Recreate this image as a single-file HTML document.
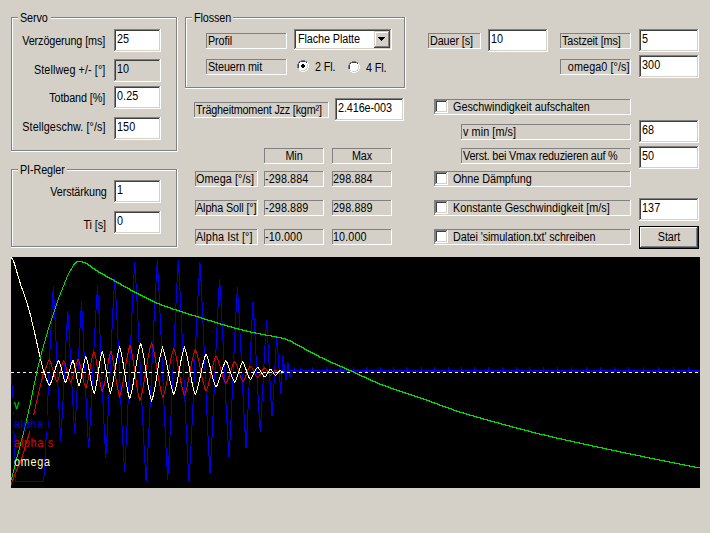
<!DOCTYPE html>
<html><head><meta charset="utf-8"><style>
html,body{margin:0;padding:0;}
body{width:710px;height:533px;background:#d4d0c8;position:relative;overflow:hidden;font-family:'Liberation Sans',sans-serif;}
</style></head><body>
<div style="position:absolute;left:11px;top:17px;width:166px;height:1px;background:#808080"></div>
<div style="position:absolute;left:11px;top:17px;width:1px;height:134px;background:#808080"></div>
<div style="position:absolute;left:11px;top:150px;width:166px;height:1px;background:#808080"></div>
<div style="position:absolute;left:176px;top:17px;width:1px;height:134px;background:#808080"></div>
<div style="position:absolute;left:12px;top:18px;width:164px;height:1px;background:#fff"></div>
<div style="position:absolute;left:12px;top:18px;width:1px;height:132px;background:#fff"></div>
<div style="position:absolute;left:11px;top:151px;width:167px;height:1px;background:#fff"></div>
<div style="position:absolute;left:177px;top:17px;width:1px;height:135px;background:#fff"></div>
<div style="position:absolute;left:18px;top:16px;width:33px;height:3px;background:#d4d0c8"></div>
<div style="position:absolute;left:20px;top:12px;font:12px/13px 'Liberation Sans',sans-serif;white-space:pre;color:#000;transform:scaleX(0.9);transform-origin:0 0;letter-spacing:-0.12px;">Servo</div>
<div style="position:absolute;left:11px;top:169px;width:166px;height:1px;background:#808080"></div>
<div style="position:absolute;left:11px;top:169px;width:1px;height:78px;background:#808080"></div>
<div style="position:absolute;left:11px;top:246px;width:166px;height:1px;background:#808080"></div>
<div style="position:absolute;left:176px;top:169px;width:1px;height:78px;background:#808080"></div>
<div style="position:absolute;left:12px;top:170px;width:164px;height:1px;background:#fff"></div>
<div style="position:absolute;left:12px;top:170px;width:1px;height:76px;background:#fff"></div>
<div style="position:absolute;left:11px;top:247px;width:167px;height:1px;background:#fff"></div>
<div style="position:absolute;left:177px;top:169px;width:1px;height:79px;background:#fff"></div>
<div style="position:absolute;left:18px;top:168px;width:49px;height:3px;background:#d4d0c8"></div>
<div style="position:absolute;left:20px;top:164px;font:12px/13px 'Liberation Sans',sans-serif;white-space:pre;color:#000;transform:scaleX(0.9);transform-origin:0 0;letter-spacing:-0.12px;">PI-Regler</div>
<div style="position:absolute;left:185px;top:17px;width:220px;height:1px;background:#808080"></div>
<div style="position:absolute;left:185px;top:17px;width:1px;height:71px;background:#808080"></div>
<div style="position:absolute;left:185px;top:87px;width:220px;height:1px;background:#808080"></div>
<div style="position:absolute;left:404px;top:17px;width:1px;height:71px;background:#808080"></div>
<div style="position:absolute;left:186px;top:18px;width:218px;height:1px;background:#fff"></div>
<div style="position:absolute;left:186px;top:18px;width:1px;height:69px;background:#fff"></div>
<div style="position:absolute;left:185px;top:88px;width:221px;height:1px;background:#fff"></div>
<div style="position:absolute;left:405px;top:17px;width:1px;height:72px;background:#fff"></div>
<div style="position:absolute;left:192px;top:16px;width:41px;height:3px;background:#d4d0c8"></div>
<div style="position:absolute;left:194px;top:12px;font:12px/13px 'Liberation Sans',sans-serif;white-space:pre;color:#000;transform:scaleX(0.9);transform-origin:0 0;letter-spacing:-0.12px;">Flossen</div>
<div style="position:absolute;right:605px;top:35px;font:12px/13px 'Liberation Sans',sans-serif;white-space:pre;color:#000;text-align:right;transform:scaleX(0.9);transform-origin:100% 0;letter-spacing:-0.12px;">Verzögerung [ms]</div>
<div style="position:absolute;right:605px;top:64px;font:12px/13px 'Liberation Sans',sans-serif;white-space:pre;color:#000;text-align:right;transform:scaleX(0.9);transform-origin:100% 0;letter-spacing:0.1px;">Stellweg +/- [°]</div>
<div style="position:absolute;right:605px;top:92px;font:12px/13px 'Liberation Sans',sans-serif;white-space:pre;color:#000;text-align:right;transform:scaleX(0.9);transform-origin:100% 0;letter-spacing:-0.12px;">Totband [%]</div>
<div style="position:absolute;right:604px;top:121px;font:12px/13px 'Liberation Sans',sans-serif;white-space:pre;color:#000;text-align:right;transform:scaleX(0.9);transform-origin:100% 0;letter-spacing:0.1px;">Stellgeschw. [°/s]</div>
<div style="position:absolute;left:114px;top:29px;width:47px;height:23px;background:#fff"></div>
<div style="position:absolute;left:114px;top:29px;width:46px;height:1px;background:#808080"></div>
<div style="position:absolute;left:114px;top:29px;width:1px;height:22px;background:#808080"></div>
<div style="position:absolute;left:114px;top:51px;width:47px;height:1px;background:#fff"></div>
<div style="position:absolute;left:160px;top:29px;width:1px;height:23px;background:#fff"></div>
<div style="position:absolute;left:115px;top:30px;width:44px;height:1px;background:#404040"></div>
<div style="position:absolute;left:115px;top:30px;width:1px;height:20px;background:#404040"></div>
<div style="position:absolute;left:115px;top:50px;width:45px;height:1px;background:#d4d0c8"></div>
<div style="position:absolute;left:159px;top:30px;width:1px;height:21px;background:#d4d0c8"></div>
<div style="position:absolute;left:117px;top:33px;font:12px/13px 'Liberation Sans',sans-serif;white-space:pre;color:#000;transform:scaleX(0.9);transform-origin:0 0;letter-spacing:0.1px;">25</div>
<div style="position:absolute;left:114px;top:59px;width:47px;height:23px;background:#d4d0c8"></div>
<div style="position:absolute;left:114px;top:59px;width:46px;height:1px;background:#808080"></div>
<div style="position:absolute;left:114px;top:59px;width:1px;height:22px;background:#808080"></div>
<div style="position:absolute;left:114px;top:81px;width:47px;height:1px;background:#fff"></div>
<div style="position:absolute;left:160px;top:59px;width:1px;height:23px;background:#fff"></div>
<div style="position:absolute;left:115px;top:60px;width:44px;height:1px;background:#404040"></div>
<div style="position:absolute;left:115px;top:60px;width:1px;height:20px;background:#404040"></div>
<div style="position:absolute;left:115px;top:80px;width:45px;height:1px;background:#d4d0c8"></div>
<div style="position:absolute;left:159px;top:60px;width:1px;height:21px;background:#d4d0c8"></div>
<div style="position:absolute;left:117px;top:63px;font:12px/13px 'Liberation Sans',sans-serif;white-space:pre;color:#000;transform:scaleX(0.9);transform-origin:0 0;letter-spacing:0.1px;">10</div>
<div style="position:absolute;left:114px;top:86px;width:47px;height:23px;background:#fff"></div>
<div style="position:absolute;left:114px;top:86px;width:46px;height:1px;background:#808080"></div>
<div style="position:absolute;left:114px;top:86px;width:1px;height:22px;background:#808080"></div>
<div style="position:absolute;left:114px;top:108px;width:47px;height:1px;background:#fff"></div>
<div style="position:absolute;left:160px;top:86px;width:1px;height:23px;background:#fff"></div>
<div style="position:absolute;left:115px;top:87px;width:44px;height:1px;background:#404040"></div>
<div style="position:absolute;left:115px;top:87px;width:1px;height:20px;background:#404040"></div>
<div style="position:absolute;left:115px;top:107px;width:45px;height:1px;background:#d4d0c8"></div>
<div style="position:absolute;left:159px;top:87px;width:1px;height:21px;background:#d4d0c8"></div>
<div style="position:absolute;left:117px;top:90px;font:12px/13px 'Liberation Sans',sans-serif;white-space:pre;color:#000;transform:scaleX(0.9);transform-origin:0 0;letter-spacing:0.1px;">0.25</div>
<div style="position:absolute;left:114px;top:117px;width:47px;height:23px;background:#fff"></div>
<div style="position:absolute;left:114px;top:117px;width:46px;height:1px;background:#808080"></div>
<div style="position:absolute;left:114px;top:117px;width:1px;height:22px;background:#808080"></div>
<div style="position:absolute;left:114px;top:139px;width:47px;height:1px;background:#fff"></div>
<div style="position:absolute;left:160px;top:117px;width:1px;height:23px;background:#fff"></div>
<div style="position:absolute;left:115px;top:118px;width:44px;height:1px;background:#404040"></div>
<div style="position:absolute;left:115px;top:118px;width:1px;height:20px;background:#404040"></div>
<div style="position:absolute;left:115px;top:138px;width:45px;height:1px;background:#d4d0c8"></div>
<div style="position:absolute;left:159px;top:118px;width:1px;height:21px;background:#d4d0c8"></div>
<div style="position:absolute;left:117px;top:121px;font:12px/13px 'Liberation Sans',sans-serif;white-space:pre;color:#000;transform:scaleX(0.9);transform-origin:0 0;letter-spacing:0.1px;">150</div>
<div style="position:absolute;right:603px;top:186px;font:12px/13px 'Liberation Sans',sans-serif;white-space:pre;color:#000;text-align:right;transform:scaleX(0.9);transform-origin:100% 0;letter-spacing:-0.12px;">Verstärkung</div>
<div style="position:absolute;right:604px;top:219px;font:12px/13px 'Liberation Sans',sans-serif;white-space:pre;color:#000;text-align:right;transform:scaleX(0.9);transform-origin:100% 0;letter-spacing:-0.12px;">Ti [s]</div>
<div style="position:absolute;left:114px;top:180px;width:47px;height:23px;background:#fff"></div>
<div style="position:absolute;left:114px;top:180px;width:46px;height:1px;background:#808080"></div>
<div style="position:absolute;left:114px;top:180px;width:1px;height:22px;background:#808080"></div>
<div style="position:absolute;left:114px;top:202px;width:47px;height:1px;background:#fff"></div>
<div style="position:absolute;left:160px;top:180px;width:1px;height:23px;background:#fff"></div>
<div style="position:absolute;left:115px;top:181px;width:44px;height:1px;background:#404040"></div>
<div style="position:absolute;left:115px;top:181px;width:1px;height:20px;background:#404040"></div>
<div style="position:absolute;left:115px;top:201px;width:45px;height:1px;background:#d4d0c8"></div>
<div style="position:absolute;left:159px;top:181px;width:1px;height:21px;background:#d4d0c8"></div>
<div style="position:absolute;left:117px;top:184px;font:12px/13px 'Liberation Sans',sans-serif;white-space:pre;color:#000;transform:scaleX(0.9);transform-origin:0 0;letter-spacing:0.1px;">1</div>
<div style="position:absolute;left:114px;top:211px;width:47px;height:23px;background:#fff"></div>
<div style="position:absolute;left:114px;top:211px;width:46px;height:1px;background:#808080"></div>
<div style="position:absolute;left:114px;top:211px;width:1px;height:22px;background:#808080"></div>
<div style="position:absolute;left:114px;top:233px;width:47px;height:1px;background:#fff"></div>
<div style="position:absolute;left:160px;top:211px;width:1px;height:23px;background:#fff"></div>
<div style="position:absolute;left:115px;top:212px;width:44px;height:1px;background:#404040"></div>
<div style="position:absolute;left:115px;top:212px;width:1px;height:20px;background:#404040"></div>
<div style="position:absolute;left:115px;top:232px;width:45px;height:1px;background:#d4d0c8"></div>
<div style="position:absolute;left:159px;top:212px;width:1px;height:21px;background:#d4d0c8"></div>
<div style="position:absolute;left:117px;top:215px;font:12px/13px 'Liberation Sans',sans-serif;white-space:pre;color:#000;transform:scaleX(0.9);transform-origin:0 0;letter-spacing:0.1px;">0</div>
<div style="position:absolute;left:206px;top:33px;width:80px;height:1px;background:#808080"></div>
<div style="position:absolute;left:206px;top:33px;width:1px;height:15px;background:#808080"></div>
<div style="position:absolute;left:206px;top:48px;width:81px;height:1px;background:#fff"></div>
<div style="position:absolute;left:286px;top:33px;width:1px;height:16px;background:#fff"></div>
<div style="position:absolute;left:208px;top:35px;font:12px/13px 'Liberation Sans',sans-serif;white-space:pre;color:#000;transform:scaleX(0.9);transform-origin:0 0;letter-spacing:-0.12px;">Profil</div>
<div style="position:absolute;left:206px;top:59px;width:80px;height:1px;background:#808080"></div>
<div style="position:absolute;left:206px;top:59px;width:1px;height:15px;background:#808080"></div>
<div style="position:absolute;left:206px;top:74px;width:81px;height:1px;background:#fff"></div>
<div style="position:absolute;left:286px;top:59px;width:1px;height:16px;background:#fff"></div>
<div style="position:absolute;left:208px;top:61px;font:12px/13px 'Liberation Sans',sans-serif;white-space:pre;color:#000;transform:scaleX(0.9);transform-origin:0 0;letter-spacing:-0.12px;">Steuern mit</div>
<div style="position:absolute;left:294px;top:29px;width:98px;height:21px;background:#fff"></div>
<div style="position:absolute;left:294px;top:29px;width:97px;height:1px;background:#808080"></div>
<div style="position:absolute;left:294px;top:29px;width:1px;height:20px;background:#808080"></div>
<div style="position:absolute;left:294px;top:49px;width:98px;height:1px;background:#fff"></div>
<div style="position:absolute;left:391px;top:29px;width:1px;height:21px;background:#fff"></div>
<div style="position:absolute;left:295px;top:30px;width:95px;height:1px;background:#404040"></div>
<div style="position:absolute;left:295px;top:30px;width:1px;height:18px;background:#404040"></div>
<div style="position:absolute;left:295px;top:48px;width:96px;height:1px;background:#d4d0c8"></div>
<div style="position:absolute;left:390px;top:30px;width:1px;height:19px;background:#d4d0c8"></div>
<div style="position:absolute;left:374px;top:31px;width:16px;height:17px;background:#d4d0c8"></div>
<div style="position:absolute;left:374px;top:31px;width:15px;height:1px;background:#d4d0c8"></div>
<div style="position:absolute;left:374px;top:31px;width:1px;height:16px;background:#d4d0c8"></div>
<div style="position:absolute;left:374px;top:47px;width:16px;height:1px;background:#404040"></div>
<div style="position:absolute;left:389px;top:31px;width:1px;height:17px;background:#404040"></div>
<div style="position:absolute;left:375px;top:32px;width:13px;height:1px;background:#fff"></div>
<div style="position:absolute;left:375px;top:32px;width:1px;height:14px;background:#fff"></div>
<div style="position:absolute;left:375px;top:46px;width:14px;height:1px;background:#808080"></div>
<div style="position:absolute;left:388px;top:32px;width:1px;height:15px;background:#808080"></div>
<svg style="position:absolute;left:378px;top:37px" width="7" height="4" shape-rendering="crispEdges"><path d="M0 0h7v1H0zM1 1h5v1H1zM2 2h3v1H2zM3 3h1v1H3z" fill="#000"/></svg>
<div style="position:absolute;left:298px;top:33px;font:12px/13px 'Liberation Sans',sans-serif;white-space:pre;color:#000;transform:scaleX(0.9);transform-origin:0 0;letter-spacing:-0.1px;">Flache Platte</div>
<svg style="position:absolute;left:297px;top:60px" width="12" height="12" viewBox="0 0 12 12" shape-rendering="crispEdges">
<path d="M4 0h4v1H4zM2 1h2v1H2zM8 1h2v1H8zM1 2h1v2H1zM0 4h1v4H0zM1 8h1v0H1z" fill="#808080"/>
<path d="M4 1h4v1H4zM2 2h2v1H2zM8 2h2v1H8zM2 3h1v1H2zM1 4h1v4H1zM2 8h0v0z" fill="#404040"/>
<path d="M2 3h8v6H2zM3 2h6v8H3zM4 9h4v1H4z" fill="#fff"/>
<path d="M10 2h1v2h-1zM10 8h1v2h-1zM11 4h1v4h-1zM8 10h2v1H8zM2 10h2v1H2zM4 11h4v1H4z" fill="#fff"/>
<path d="M10 4h1v4h-1zM8 9h2v1H8zM4 10h4v1H4zM9 8h1v1H9z" fill="#d4d0c8"/>
<path d="M5 4h2v1H5zM4 5h4v2H4zM5 7h2v1H5z" fill="#000"/>
</svg>
<div style="position:absolute;left:315px;top:61px;font:12px/13px 'Liberation Sans',sans-serif;white-space:pre;color:#000;transform:scaleX(0.9);transform-origin:0 0;letter-spacing:-0.12px;">2 Fl.</div>
<svg style="position:absolute;left:348px;top:61px" width="12" height="12" viewBox="0 0 12 12" shape-rendering="crispEdges">
<path d="M4 0h4v1H4zM2 1h2v1H2zM8 1h2v1H8zM1 2h1v2H1zM0 4h1v4H0zM1 8h1v0H1z" fill="#808080"/>
<path d="M4 1h4v1H4zM2 2h2v1H2zM8 2h2v1H8zM2 3h1v1H2zM1 4h1v4H1zM2 8h0v0z" fill="#404040"/>
<path d="M2 3h8v6H2zM3 2h6v8H3zM4 9h4v1H4z" fill="#fff"/>
<path d="M10 2h1v2h-1zM10 8h1v2h-1zM11 4h1v4h-1zM8 10h2v1H8zM2 10h2v1H2zM4 11h4v1H4z" fill="#fff"/>
<path d="M10 4h1v4h-1zM8 9h2v1H8zM4 10h4v1H4zM9 8h1v1H9z" fill="#d4d0c8"/>

</svg>
<div style="position:absolute;left:366px;top:62px;font:12px/13px 'Liberation Sans',sans-serif;white-space:pre;color:#000;transform:scaleX(0.9);transform-origin:0 0;letter-spacing:-0.12px;">4 Fl.</div>
<div style="position:absolute;left:194px;top:102px;width:134px;height:1px;background:#808080"></div>
<div style="position:absolute;left:194px;top:102px;width:1px;height:15px;background:#808080"></div>
<div style="position:absolute;left:194px;top:117px;width:135px;height:1px;background:#fff"></div>
<div style="position:absolute;left:328px;top:102px;width:1px;height:16px;background:#fff"></div>
<div style="position:absolute;left:196px;top:104px;font:12px/13px 'Liberation Sans',sans-serif;white-space:pre;color:#000;transform:scaleX(0.9);transform-origin:0 0;letter-spacing:-0.21px;">Trägheitmoment Jzz [kgm²]</div>
<div style="position:absolute;left:335px;top:98px;width:69px;height:23px;background:#fff"></div>
<div style="position:absolute;left:335px;top:98px;width:68px;height:1px;background:#808080"></div>
<div style="position:absolute;left:335px;top:98px;width:1px;height:22px;background:#808080"></div>
<div style="position:absolute;left:335px;top:120px;width:69px;height:1px;background:#fff"></div>
<div style="position:absolute;left:403px;top:98px;width:1px;height:23px;background:#fff"></div>
<div style="position:absolute;left:336px;top:99px;width:66px;height:1px;background:#404040"></div>
<div style="position:absolute;left:336px;top:99px;width:1px;height:20px;background:#404040"></div>
<div style="position:absolute;left:336px;top:119px;width:67px;height:1px;background:#d4d0c8"></div>
<div style="position:absolute;left:402px;top:99px;width:1px;height:21px;background:#d4d0c8"></div>
<div style="position:absolute;left:338px;top:102px;font:12px/13px 'Liberation Sans',sans-serif;white-space:pre;color:#000;transform:scaleX(0.9);transform-origin:0 0;letter-spacing:-0.09px;">2.416e-003</div>
<div style="position:absolute;left:428px;top:33px;width:52px;height:1px;background:#808080"></div>
<div style="position:absolute;left:428px;top:33px;width:1px;height:15px;background:#808080"></div>
<div style="position:absolute;left:428px;top:48px;width:53px;height:1px;background:#fff"></div>
<div style="position:absolute;left:480px;top:33px;width:1px;height:16px;background:#fff"></div>
<div style="position:absolute;left:430px;top:35px;font:12px/13px 'Liberation Sans',sans-serif;white-space:pre;color:#000;transform:scaleX(0.9);transform-origin:0 0;letter-spacing:-0.12px;">Dauer [s]</div>
<div style="position:absolute;left:488px;top:29px;width:60px;height:23px;background:#fff"></div>
<div style="position:absolute;left:488px;top:29px;width:59px;height:1px;background:#808080"></div>
<div style="position:absolute;left:488px;top:29px;width:1px;height:22px;background:#808080"></div>
<div style="position:absolute;left:488px;top:51px;width:60px;height:1px;background:#fff"></div>
<div style="position:absolute;left:547px;top:29px;width:1px;height:23px;background:#fff"></div>
<div style="position:absolute;left:489px;top:30px;width:57px;height:1px;background:#404040"></div>
<div style="position:absolute;left:489px;top:30px;width:1px;height:20px;background:#404040"></div>
<div style="position:absolute;left:489px;top:50px;width:58px;height:1px;background:#d4d0c8"></div>
<div style="position:absolute;left:546px;top:30px;width:1px;height:21px;background:#d4d0c8"></div>
<div style="position:absolute;left:491px;top:33px;font:12px/13px 'Liberation Sans',sans-serif;white-space:pre;color:#000;transform:scaleX(0.9);transform-origin:0 0;letter-spacing:0.1px;">10</div>
<div style="position:absolute;left:560px;top:33px;width:70px;height:1px;background:#808080"></div>
<div style="position:absolute;left:560px;top:33px;width:1px;height:15px;background:#808080"></div>
<div style="position:absolute;left:560px;top:48px;width:71px;height:1px;background:#fff"></div>
<div style="position:absolute;left:630px;top:33px;width:1px;height:16px;background:#fff"></div>
<div style="position:absolute;left:562px;top:35px;font:12px/13px 'Liberation Sans',sans-serif;white-space:pre;color:#000;transform:scaleX(0.9);transform-origin:0 0;letter-spacing:-0.12px;">Tastzeit [ms]</div>
<div style="position:absolute;left:639px;top:29px;width:60px;height:23px;background:#fff"></div>
<div style="position:absolute;left:639px;top:29px;width:59px;height:1px;background:#808080"></div>
<div style="position:absolute;left:639px;top:29px;width:1px;height:22px;background:#808080"></div>
<div style="position:absolute;left:639px;top:51px;width:60px;height:1px;background:#fff"></div>
<div style="position:absolute;left:698px;top:29px;width:1px;height:23px;background:#fff"></div>
<div style="position:absolute;left:640px;top:30px;width:57px;height:1px;background:#404040"></div>
<div style="position:absolute;left:640px;top:30px;width:1px;height:20px;background:#404040"></div>
<div style="position:absolute;left:640px;top:50px;width:58px;height:1px;background:#d4d0c8"></div>
<div style="position:absolute;left:697px;top:30px;width:1px;height:21px;background:#d4d0c8"></div>
<div style="position:absolute;left:642px;top:33px;font:12px/13px 'Liberation Sans',sans-serif;white-space:pre;color:#000;transform:scaleX(0.9);transform-origin:0 0;letter-spacing:0.1px;">5</div>
<div style="position:absolute;left:560px;top:59px;width:70px;height:1px;background:#808080"></div>
<div style="position:absolute;left:560px;top:59px;width:1px;height:15px;background:#808080"></div>
<div style="position:absolute;left:560px;top:74px;width:71px;height:1px;background:#fff"></div>
<div style="position:absolute;left:630px;top:59px;width:1px;height:16px;background:#fff"></div>
<div style="position:absolute;right:80px;top:61px;font:12px/13px 'Liberation Sans',sans-serif;white-space:pre;color:#000;text-align:right;transform:scaleX(0.9);transform-origin:100% 0;letter-spacing:0.1px;">omega0 [°/s]</div>
<div style="position:absolute;left:639px;top:55px;width:60px;height:23px;background:#fff"></div>
<div style="position:absolute;left:639px;top:55px;width:59px;height:1px;background:#808080"></div>
<div style="position:absolute;left:639px;top:55px;width:1px;height:22px;background:#808080"></div>
<div style="position:absolute;left:639px;top:77px;width:60px;height:1px;background:#fff"></div>
<div style="position:absolute;left:698px;top:55px;width:1px;height:23px;background:#fff"></div>
<div style="position:absolute;left:640px;top:56px;width:57px;height:1px;background:#404040"></div>
<div style="position:absolute;left:640px;top:56px;width:1px;height:20px;background:#404040"></div>
<div style="position:absolute;left:640px;top:76px;width:58px;height:1px;background:#d4d0c8"></div>
<div style="position:absolute;left:697px;top:56px;width:1px;height:21px;background:#d4d0c8"></div>
<div style="position:absolute;left:642px;top:59px;font:12px/13px 'Liberation Sans',sans-serif;white-space:pre;color:#000;transform:scaleX(0.9);transform-origin:0 0;letter-spacing:0.1px;">300</div>
<div style="position:absolute;left:434px;top:99px;width:196px;height:1px;background:#808080"></div>
<div style="position:absolute;left:434px;top:99px;width:1px;height:15px;background:#808080"></div>
<div style="position:absolute;left:434px;top:114px;width:197px;height:1px;background:#fff"></div>
<div style="position:absolute;left:630px;top:99px;width:1px;height:16px;background:#fff"></div>
<div style="position:absolute;left:435px;top:100px;width:13px;height:13px;background:#fff"></div>
<div style="position:absolute;left:435px;top:100px;width:12px;height:1px;background:#808080"></div>
<div style="position:absolute;left:435px;top:100px;width:1px;height:12px;background:#808080"></div>
<div style="position:absolute;left:435px;top:112px;width:13px;height:1px;background:#fff"></div>
<div style="position:absolute;left:447px;top:100px;width:1px;height:13px;background:#fff"></div>
<div style="position:absolute;left:436px;top:101px;width:10px;height:1px;background:#404040"></div>
<div style="position:absolute;left:436px;top:101px;width:1px;height:10px;background:#404040"></div>
<div style="position:absolute;left:436px;top:111px;width:11px;height:1px;background:#d4d0c8"></div>
<div style="position:absolute;left:446px;top:101px;width:1px;height:11px;background:#d4d0c8"></div>
<div style="position:absolute;left:438px;top:104px;font:12px/13px 'Liberation Sans',sans-serif;white-space:pre;color:#000;transform:scaleX(0.9);transform-origin:0 0;letter-spacing:0.1px;"></div>
<div style="position:absolute;left:453px;top:101px;font:12px/13px 'Liberation Sans',sans-serif;white-space:pre;color:#000;transform:scaleX(0.9);transform-origin:0 0;letter-spacing:0px;">Geschwindigkeit aufschalten</div>
<div style="position:absolute;left:461px;top:124px;width:169px;height:1px;background:#808080"></div>
<div style="position:absolute;left:461px;top:124px;width:1px;height:15px;background:#808080"></div>
<div style="position:absolute;left:461px;top:139px;width:170px;height:1px;background:#fff"></div>
<div style="position:absolute;left:630px;top:124px;width:1px;height:16px;background:#fff"></div>
<div style="position:absolute;left:463px;top:126px;font:12px/13px 'Liberation Sans',sans-serif;white-space:pre;color:#000;transform:scaleX(0.9);transform-origin:0 0;letter-spacing:0.1px;">v min [m/s]</div>
<div style="position:absolute;left:639px;top:120px;width:60px;height:23px;background:#fff"></div>
<div style="position:absolute;left:639px;top:120px;width:59px;height:1px;background:#808080"></div>
<div style="position:absolute;left:639px;top:120px;width:1px;height:22px;background:#808080"></div>
<div style="position:absolute;left:639px;top:142px;width:60px;height:1px;background:#fff"></div>
<div style="position:absolute;left:698px;top:120px;width:1px;height:23px;background:#fff"></div>
<div style="position:absolute;left:640px;top:121px;width:57px;height:1px;background:#404040"></div>
<div style="position:absolute;left:640px;top:121px;width:1px;height:20px;background:#404040"></div>
<div style="position:absolute;left:640px;top:141px;width:58px;height:1px;background:#d4d0c8"></div>
<div style="position:absolute;left:697px;top:121px;width:1px;height:21px;background:#d4d0c8"></div>
<div style="position:absolute;left:642px;top:124px;font:12px/13px 'Liberation Sans',sans-serif;white-space:pre;color:#000;transform:scaleX(0.9);transform-origin:0 0;letter-spacing:0.1px;">68</div>
<div style="position:absolute;left:461px;top:148px;width:169px;height:1px;background:#808080"></div>
<div style="position:absolute;left:461px;top:148px;width:1px;height:15px;background:#808080"></div>
<div style="position:absolute;left:461px;top:163px;width:170px;height:1px;background:#fff"></div>
<div style="position:absolute;left:630px;top:148px;width:1px;height:16px;background:#fff"></div>
<div style="position:absolute;left:463px;top:150px;font:12px/13px 'Liberation Sans',sans-serif;white-space:pre;color:#000;transform:scaleX(0.9);transform-origin:0 0;letter-spacing:-0.2px;">Verst. bei Vmax reduzieren auf %</div>
<div style="position:absolute;left:639px;top:146px;width:60px;height:23px;background:#fff"></div>
<div style="position:absolute;left:639px;top:146px;width:59px;height:1px;background:#808080"></div>
<div style="position:absolute;left:639px;top:146px;width:1px;height:22px;background:#808080"></div>
<div style="position:absolute;left:639px;top:168px;width:60px;height:1px;background:#fff"></div>
<div style="position:absolute;left:698px;top:146px;width:1px;height:23px;background:#fff"></div>
<div style="position:absolute;left:640px;top:147px;width:57px;height:1px;background:#404040"></div>
<div style="position:absolute;left:640px;top:147px;width:1px;height:20px;background:#404040"></div>
<div style="position:absolute;left:640px;top:167px;width:58px;height:1px;background:#d4d0c8"></div>
<div style="position:absolute;left:697px;top:147px;width:1px;height:21px;background:#d4d0c8"></div>
<div style="position:absolute;left:642px;top:150px;font:12px/13px 'Liberation Sans',sans-serif;white-space:pre;color:#000;transform:scaleX(0.9);transform-origin:0 0;letter-spacing:0.1px;">50</div>
<div style="position:absolute;left:434px;top:171px;width:196px;height:1px;background:#808080"></div>
<div style="position:absolute;left:434px;top:171px;width:1px;height:15px;background:#808080"></div>
<div style="position:absolute;left:434px;top:186px;width:197px;height:1px;background:#fff"></div>
<div style="position:absolute;left:630px;top:171px;width:1px;height:16px;background:#fff"></div>
<div style="position:absolute;left:435px;top:172px;width:13px;height:13px;background:#fff"></div>
<div style="position:absolute;left:435px;top:172px;width:12px;height:1px;background:#808080"></div>
<div style="position:absolute;left:435px;top:172px;width:1px;height:12px;background:#808080"></div>
<div style="position:absolute;left:435px;top:184px;width:13px;height:1px;background:#fff"></div>
<div style="position:absolute;left:447px;top:172px;width:1px;height:13px;background:#fff"></div>
<div style="position:absolute;left:436px;top:173px;width:10px;height:1px;background:#404040"></div>
<div style="position:absolute;left:436px;top:173px;width:1px;height:10px;background:#404040"></div>
<div style="position:absolute;left:436px;top:183px;width:11px;height:1px;background:#d4d0c8"></div>
<div style="position:absolute;left:446px;top:173px;width:1px;height:11px;background:#d4d0c8"></div>
<div style="position:absolute;left:438px;top:176px;font:12px/13px 'Liberation Sans',sans-serif;white-space:pre;color:#000;transform:scaleX(0.9);transform-origin:0 0;letter-spacing:0.1px;"></div>
<div style="position:absolute;left:453px;top:173px;font:12px/13px 'Liberation Sans',sans-serif;white-space:pre;color:#000;transform:scaleX(0.9);transform-origin:0 0;letter-spacing:-0.05px;">Ohne Dämpfung</div>
<div style="position:absolute;left:434px;top:200px;width:196px;height:1px;background:#808080"></div>
<div style="position:absolute;left:434px;top:200px;width:1px;height:15px;background:#808080"></div>
<div style="position:absolute;left:434px;top:215px;width:197px;height:1px;background:#fff"></div>
<div style="position:absolute;left:630px;top:200px;width:1px;height:16px;background:#fff"></div>
<div style="position:absolute;left:435px;top:201px;width:13px;height:13px;background:#fff"></div>
<div style="position:absolute;left:435px;top:201px;width:12px;height:1px;background:#808080"></div>
<div style="position:absolute;left:435px;top:201px;width:1px;height:12px;background:#808080"></div>
<div style="position:absolute;left:435px;top:213px;width:13px;height:1px;background:#fff"></div>
<div style="position:absolute;left:447px;top:201px;width:1px;height:13px;background:#fff"></div>
<div style="position:absolute;left:436px;top:202px;width:10px;height:1px;background:#404040"></div>
<div style="position:absolute;left:436px;top:202px;width:1px;height:10px;background:#404040"></div>
<div style="position:absolute;left:436px;top:212px;width:11px;height:1px;background:#d4d0c8"></div>
<div style="position:absolute;left:446px;top:202px;width:1px;height:11px;background:#d4d0c8"></div>
<div style="position:absolute;left:438px;top:205px;font:12px/13px 'Liberation Sans',sans-serif;white-space:pre;color:#000;transform:scaleX(0.9);transform-origin:0 0;letter-spacing:0.1px;"></div>
<div style="position:absolute;left:453px;top:202px;font:12px/13px 'Liberation Sans',sans-serif;white-space:pre;color:#000;transform:scaleX(0.9);transform-origin:0 0;letter-spacing:0px;">Konstante Geschwindigkeit [m/s]</div>
<div style="position:absolute;left:639px;top:198px;width:60px;height:23px;background:#fff"></div>
<div style="position:absolute;left:639px;top:198px;width:59px;height:1px;background:#808080"></div>
<div style="position:absolute;left:639px;top:198px;width:1px;height:22px;background:#808080"></div>
<div style="position:absolute;left:639px;top:220px;width:60px;height:1px;background:#fff"></div>
<div style="position:absolute;left:698px;top:198px;width:1px;height:23px;background:#fff"></div>
<div style="position:absolute;left:640px;top:199px;width:57px;height:1px;background:#404040"></div>
<div style="position:absolute;left:640px;top:199px;width:1px;height:20px;background:#404040"></div>
<div style="position:absolute;left:640px;top:219px;width:58px;height:1px;background:#d4d0c8"></div>
<div style="position:absolute;left:697px;top:199px;width:1px;height:21px;background:#d4d0c8"></div>
<div style="position:absolute;left:642px;top:202px;font:12px/13px 'Liberation Sans',sans-serif;white-space:pre;color:#000;transform:scaleX(0.9);transform-origin:0 0;letter-spacing:0.1px;">137</div>
<div style="position:absolute;left:434px;top:229px;width:196px;height:1px;background:#808080"></div>
<div style="position:absolute;left:434px;top:229px;width:1px;height:15px;background:#808080"></div>
<div style="position:absolute;left:434px;top:244px;width:197px;height:1px;background:#fff"></div>
<div style="position:absolute;left:630px;top:229px;width:1px;height:16px;background:#fff"></div>
<div style="position:absolute;left:435px;top:230px;width:13px;height:13px;background:#fff"></div>
<div style="position:absolute;left:435px;top:230px;width:12px;height:1px;background:#808080"></div>
<div style="position:absolute;left:435px;top:230px;width:1px;height:12px;background:#808080"></div>
<div style="position:absolute;left:435px;top:242px;width:13px;height:1px;background:#fff"></div>
<div style="position:absolute;left:447px;top:230px;width:1px;height:13px;background:#fff"></div>
<div style="position:absolute;left:436px;top:231px;width:10px;height:1px;background:#404040"></div>
<div style="position:absolute;left:436px;top:231px;width:1px;height:10px;background:#404040"></div>
<div style="position:absolute;left:436px;top:241px;width:11px;height:1px;background:#d4d0c8"></div>
<div style="position:absolute;left:446px;top:231px;width:1px;height:11px;background:#d4d0c8"></div>
<div style="position:absolute;left:438px;top:234px;font:12px/13px 'Liberation Sans',sans-serif;white-space:pre;color:#000;transform:scaleX(0.9);transform-origin:0 0;letter-spacing:0.1px;"></div>
<div style="position:absolute;left:453px;top:231px;font:12px/13px 'Liberation Sans',sans-serif;white-space:pre;color:#000;transform:scaleX(0.9);transform-origin:0 0;letter-spacing:-0.1px;">Datei 'simulation.txt' schreiben</div>
<div style="position:absolute;left:639px;top:226px;width:60px;height:23px;background:#000"></div>
<div style="position:absolute;left:640px;top:227px;width:58px;height:21px;background:#d4d0c8"></div>
<div style="position:absolute;left:640px;top:227px;width:57px;height:1px;background:#fff"></div>
<div style="position:absolute;left:640px;top:227px;width:1px;height:20px;background:#fff"></div>
<div style="position:absolute;left:640px;top:247px;width:58px;height:1px;background:#404040"></div>
<div style="position:absolute;left:697px;top:227px;width:1px;height:21px;background:#404040"></div>
<div style="position:absolute;left:641px;top:246px;width:56px;height:1px;background:#808080"></div>
<div style="position:absolute;left:696px;top:228px;width:1px;height:19px;background:#808080"></div>
<div style="position:absolute;left:640px;width:58px;top:231px;font:12px/13px 'Liberation Sans',sans-serif;white-space:pre;color:#000;text-align:center;transform:scaleX(0.9);transform-origin:50% 0;letter-spacing:-0.12px;">Start</div>
<div style="position:absolute;left:264px;top:148px;width:59px;height:1px;background:#808080"></div>
<div style="position:absolute;left:264px;top:148px;width:1px;height:15px;background:#808080"></div>
<div style="position:absolute;left:264px;top:163px;width:60px;height:1px;background:#fff"></div>
<div style="position:absolute;left:323px;top:148px;width:1px;height:16px;background:#fff"></div>
<div style="position:absolute;left:265px;width:58px;top:150px;font:12px/13px 'Liberation Sans',sans-serif;white-space:pre;color:#000;text-align:center;transform:scaleX(0.9);transform-origin:50% 0;letter-spacing:-0.12px;">Min</div>
<div style="position:absolute;left:332px;top:148px;width:59px;height:1px;background:#808080"></div>
<div style="position:absolute;left:332px;top:148px;width:1px;height:15px;background:#808080"></div>
<div style="position:absolute;left:332px;top:163px;width:60px;height:1px;background:#fff"></div>
<div style="position:absolute;left:391px;top:148px;width:1px;height:16px;background:#fff"></div>
<div style="position:absolute;left:333px;width:58px;top:150px;font:12px/13px 'Liberation Sans',sans-serif;white-space:pre;color:#000;text-align:center;transform:scaleX(0.9);transform-origin:50% 0;letter-spacing:-0.12px;">Max</div>
<div style="position:absolute;left:195px;top:171px;width:62px;height:1px;background:#808080"></div>
<div style="position:absolute;left:195px;top:171px;width:1px;height:15px;background:#808080"></div>
<div style="position:absolute;left:195px;top:186px;width:63px;height:1px;background:#fff"></div>
<div style="position:absolute;left:257px;top:171px;width:1px;height:16px;background:#fff"></div>
<div style="position:absolute;left:196px;top:173px;font:12px/13px 'Liberation Sans',sans-serif;white-space:pre;color:#000;transform:scaleX(0.9);transform-origin:0 0;letter-spacing:0.1px;">Omega [°/s]</div>
<div style="position:absolute;left:264px;top:171px;width:59px;height:1px;background:#808080"></div>
<div style="position:absolute;left:264px;top:171px;width:1px;height:15px;background:#808080"></div>
<div style="position:absolute;left:264px;top:186px;width:60px;height:1px;background:#fff"></div>
<div style="position:absolute;left:323px;top:171px;width:1px;height:16px;background:#fff"></div>
<div style="position:absolute;left:265px;top:173px;font:12px/13px 'Liberation Sans',sans-serif;white-space:pre;color:#000;transform:scaleX(0.9);transform-origin:0 0;letter-spacing:0.1px;">-298.884</div>
<div style="position:absolute;left:332px;top:171px;width:59px;height:1px;background:#808080"></div>
<div style="position:absolute;left:332px;top:171px;width:1px;height:15px;background:#808080"></div>
<div style="position:absolute;left:332px;top:186px;width:60px;height:1px;background:#fff"></div>
<div style="position:absolute;left:391px;top:171px;width:1px;height:16px;background:#fff"></div>
<div style="position:absolute;left:333px;top:173px;font:12px/13px 'Liberation Sans',sans-serif;white-space:pre;color:#000;transform:scaleX(0.9);transform-origin:0 0;letter-spacing:0.1px;">298.884</div>
<div style="position:absolute;left:195px;top:200px;width:62px;height:1px;background:#808080"></div>
<div style="position:absolute;left:195px;top:200px;width:1px;height:15px;background:#808080"></div>
<div style="position:absolute;left:195px;top:215px;width:63px;height:1px;background:#fff"></div>
<div style="position:absolute;left:257px;top:200px;width:1px;height:16px;background:#fff"></div>
<div style="position:absolute;left:196px;top:202px;font:12px/13px 'Liberation Sans',sans-serif;white-space:pre;color:#000;transform:scaleX(0.9);transform-origin:0 0;letter-spacing:-0.12px;">Alpha Soll [°]</div>
<div style="position:absolute;left:264px;top:200px;width:59px;height:1px;background:#808080"></div>
<div style="position:absolute;left:264px;top:200px;width:1px;height:15px;background:#808080"></div>
<div style="position:absolute;left:264px;top:215px;width:60px;height:1px;background:#fff"></div>
<div style="position:absolute;left:323px;top:200px;width:1px;height:16px;background:#fff"></div>
<div style="position:absolute;left:265px;top:202px;font:12px/13px 'Liberation Sans',sans-serif;white-space:pre;color:#000;transform:scaleX(0.9);transform-origin:0 0;letter-spacing:0.1px;">-298.889</div>
<div style="position:absolute;left:332px;top:200px;width:59px;height:1px;background:#808080"></div>
<div style="position:absolute;left:332px;top:200px;width:1px;height:15px;background:#808080"></div>
<div style="position:absolute;left:332px;top:215px;width:60px;height:1px;background:#fff"></div>
<div style="position:absolute;left:391px;top:200px;width:1px;height:16px;background:#fff"></div>
<div style="position:absolute;left:333px;top:202px;font:12px/13px 'Liberation Sans',sans-serif;white-space:pre;color:#000;transform:scaleX(0.9);transform-origin:0 0;letter-spacing:0.1px;">298.889</div>
<div style="position:absolute;left:195px;top:229px;width:62px;height:1px;background:#808080"></div>
<div style="position:absolute;left:195px;top:229px;width:1px;height:15px;background:#808080"></div>
<div style="position:absolute;left:195px;top:244px;width:63px;height:1px;background:#fff"></div>
<div style="position:absolute;left:257px;top:229px;width:1px;height:16px;background:#fff"></div>
<div style="position:absolute;left:196px;top:231px;font:12px/13px 'Liberation Sans',sans-serif;white-space:pre;color:#000;transform:scaleX(0.9);transform-origin:0 0;letter-spacing:0.1px;">Alpha Ist [°]</div>
<div style="position:absolute;left:264px;top:229px;width:59px;height:1px;background:#808080"></div>
<div style="position:absolute;left:264px;top:229px;width:1px;height:15px;background:#808080"></div>
<div style="position:absolute;left:264px;top:244px;width:60px;height:1px;background:#fff"></div>
<div style="position:absolute;left:323px;top:229px;width:1px;height:16px;background:#fff"></div>
<div style="position:absolute;left:265px;top:231px;font:12px/13px 'Liberation Sans',sans-serif;white-space:pre;color:#000;transform:scaleX(0.9);transform-origin:0 0;letter-spacing:0.1px;">-10.000</div>
<div style="position:absolute;left:332px;top:229px;width:59px;height:1px;background:#808080"></div>
<div style="position:absolute;left:332px;top:229px;width:1px;height:15px;background:#808080"></div>
<div style="position:absolute;left:332px;top:244px;width:60px;height:1px;background:#fff"></div>
<div style="position:absolute;left:391px;top:229px;width:1px;height:16px;background:#fff"></div>
<div style="position:absolute;left:333px;top:231px;font:12px/13px 'Liberation Sans',sans-serif;white-space:pre;color:#000;transform:scaleX(0.9);transform-origin:0 0;letter-spacing:0.1px;">10.000</div>
<svg style="position:absolute;left:11px;top:257px" width="689" height="231" viewBox="11 257 689 231" shape-rendering="crispEdges">
<rect x="11" y="257" width="689" height="231" fill="#000"/>
<polyline points="11.50,372.50 12.50,397.50 16.00,481.50 43.70,481.50 43.70,481.50 43.95,477.33 44.21,473.02 44.46,468.59 44.71,464.02 44.96,459.33 45.22,454.52 45.47,449.59 45.72,444.55 45.97,439.40 46.23,434.15 46.48,428.82 46.73,423.40 46.98,417.91 47.24,412.36 47.49,406.75 47.74,401.10 47.99,395.42 48.25,389.72 48.50,384.00 48.75,378.28 49.01,372.58 49.26,366.90 49.51,361.25 49.76,355.64 50.02,350.09 50.27,344.60 50.52,339.18 50.77,333.85 51.03,328.60 51.28,323.45 51.53,318.41 51.78,313.48 52.04,308.67 52.29,303.98 52.54,299.41 52.79,294.98 53.05,290.67 53.30,286.50 53.56,290.84 53.81,295.36 54.07,300.05 54.32,304.92 54.58,309.95 54.83,315.13 55.09,320.46 55.34,325.92 55.60,331.49 55.85,337.17 56.11,342.93 56.36,348.76 56.62,354.64 56.87,360.54 57.13,366.46 57.38,372.36 57.64,378.24 57.89,384.07 58.15,389.83 58.40,395.51 58.66,401.08 58.91,406.54 59.17,411.87 59.42,417.05 59.68,422.08 59.93,426.95 60.19,431.64 60.44,436.16 60.70,440.50 60.95,436.73 61.21,432.81 61.46,428.72 61.71,424.48 61.97,420.09 62.22,415.57 62.48,410.92 62.73,406.16 62.98,401.29 63.24,396.34 63.49,391.32 63.74,386.24 64.00,381.13 64.25,376.00 64.50,370.87 64.76,365.76 65.01,360.68 65.26,355.66 65.52,350.71 65.77,345.84 66.03,341.08 66.28,336.43 66.53,331.91 66.79,327.52 67.04,323.28 67.29,319.19 67.55,315.27 67.80,311.50 68.06,315.18 68.31,319.03 68.57,323.03 68.82,327.19 69.08,331.50 69.33,335.94 69.59,340.51 69.84,345.19 70.10,349.98 70.36,354.84 70.61,359.77 70.87,364.74 71.12,369.74 71.38,374.76 71.63,379.76 71.89,384.73 72.14,389.66 72.40,394.52 72.66,399.31 72.91,403.99 73.17,408.56 73.42,413.00 73.68,417.31 73.93,421.47 74.19,425.47 74.44,429.32 74.70,433.00 74.95,429.05 75.20,424.91 75.46,420.61 75.71,416.15 75.96,411.52 76.21,406.75 76.46,401.84 76.71,396.81 76.97,391.68 77.22,386.45 77.47,381.16 77.72,375.82 77.97,370.44 78.23,365.06 78.48,359.68 78.73,354.34 78.98,349.05 79.23,343.83 79.49,338.69 79.74,333.66 79.99,328.75 80.24,323.98 80.49,319.35 80.74,314.89 81.00,310.59 81.25,306.45 81.50,302.50 81.75,306.76 82.01,311.20 82.26,315.82 82.51,320.61 82.77,325.56 83.02,330.68 83.28,335.93 83.53,341.32 83.78,346.81 84.04,352.41 84.29,358.09 84.54,363.82 84.80,369.60 85.05,375.40 85.30,381.20 85.56,386.98 85.81,392.71 86.06,398.39 86.32,403.99 86.57,409.48 86.82,414.87 87.08,420.12 87.33,425.24 87.59,430.19 87.84,434.98 88.09,439.60 88.35,444.04 88.60,448.30 88.85,444.54 89.11,440.64 89.36,436.62 89.62,432.48 89.87,428.21 90.13,423.82 90.38,419.32 90.63,414.72 90.89,410.02 91.14,405.23 91.40,400.35 91.65,395.41 91.91,390.40 92.16,385.34 92.41,380.25 92.67,375.12 92.92,369.98 93.18,364.82 93.43,359.68 93.69,354.55 93.94,349.46 94.19,344.40 94.45,339.39 94.70,334.45 94.96,329.57 95.21,324.78 95.47,320.08 95.72,315.48 95.97,310.98 96.23,306.59 96.48,302.32 96.74,298.18 96.99,294.16 97.25,290.26 97.50,286.50 97.75,290.72 98.00,295.10 98.25,299.63 98.51,304.31 98.76,309.13 99.01,314.09 99.26,319.18 99.51,324.39 99.76,329.71 100.02,335.14 100.27,340.65 100.52,346.24 100.77,351.90 101.02,357.60 101.27,363.35 101.52,369.11 101.78,374.89 102.03,380.65 102.28,386.40 102.53,392.10 102.78,397.76 103.03,403.35 103.28,408.86 103.54,414.29 103.79,419.61 104.04,424.82 104.29,429.91 104.54,434.87 104.79,439.69 105.05,444.37 105.30,448.90 105.55,453.28 105.80,457.50 106.05,453.34 106.31,449.03 106.56,444.58 106.82,439.99 107.07,435.27 107.33,430.42 107.58,425.44 107.83,420.35 108.09,415.15 108.34,409.85 108.60,404.46 108.85,398.99 109.11,393.45 109.36,387.85 109.61,382.21 109.87,376.54 110.12,370.85 110.38,365.15 110.63,359.46 110.89,353.79 111.14,348.15 111.39,342.55 111.65,337.01 111.90,331.54 112.16,326.15 112.41,320.85 112.67,315.65 112.92,310.56 113.17,305.58 113.43,300.73 113.68,296.01 113.94,291.42 114.19,286.97 114.45,282.66 114.70,278.50 114.95,282.53 115.21,286.69 115.46,290.98 115.72,295.38 115.97,299.91 116.22,304.55 116.48,309.30 116.73,314.15 116.98,319.11 117.24,324.16 117.49,329.30 117.75,334.52 118.00,339.81 118.25,345.16 118.51,350.56 118.76,356.01 119.02,361.50 119.27,367.01 119.52,372.53 119.78,378.07 120.03,383.59 120.28,389.10 120.54,394.59 120.79,400.04 121.05,405.44 121.30,410.79 121.55,416.08 121.81,421.30 122.06,426.44 122.32,431.49 122.57,436.45 122.82,441.30 123.08,446.05 123.33,450.69 123.58,455.22 123.84,459.62 124.09,463.91 124.35,468.07 124.60,472.10 124.85,467.83 125.10,463.43 125.36,458.90 125.61,454.25 125.86,449.47 126.11,444.57 126.37,439.56 126.62,434.44 126.87,429.21 127.12,423.88 127.38,418.46 127.63,412.96 127.88,407.38 128.13,401.73 128.39,396.03 128.64,390.27 128.89,384.48 129.14,378.65 129.40,372.81 129.65,366.95 129.90,361.09 130.16,355.25 130.41,349.42 130.66,343.63 130.91,337.87 131.16,332.17 131.42,326.52 131.67,320.94 131.92,315.44 132.17,310.02 132.43,304.69 132.68,299.46 132.93,294.34 133.19,289.33 133.44,284.43 133.69,279.65 133.94,275.00 134.19,270.47 134.45,266.07 134.70,261.80 134.95,265.75 135.21,269.81 135.46,273.97 135.71,278.24 135.97,282.61 136.22,287.08 136.47,291.64 136.73,296.31 136.98,301.06 137.23,305.90 137.49,310.82 137.74,315.82 137.99,320.88 138.25,326.02 138.50,331.21 138.75,336.46 139.01,341.76 139.26,347.09 139.51,352.46 139.77,357.85 140.02,363.26 140.27,368.69 140.53,374.11 140.78,379.54 141.03,384.95 141.29,390.34 141.54,395.71 141.79,401.04 142.05,406.34 142.30,411.59 142.55,416.78 142.81,421.92 143.06,426.98 143.31,431.98 143.57,436.90 143.82,441.74 144.07,446.49 144.33,451.16 144.58,455.72 144.83,460.19 145.09,464.56 145.34,468.83 145.59,472.99 145.85,477.05 146.10,481.00 146.35,476.93 146.61,472.74 146.86,468.45 147.12,464.04 147.37,459.53 147.63,454.91 147.88,450.18 148.14,445.36 148.39,440.45 148.65,435.44 148.90,430.35 149.15,425.18 149.41,419.94 149.66,414.62 149.92,409.25 150.17,403.82 150.43,398.35 150.68,392.84 150.94,387.29 151.19,381.73 151.45,376.14 151.70,370.55 151.95,364.96 152.21,359.37 152.46,353.81 152.72,348.26 152.97,342.75 153.23,337.28 153.48,331.85 153.74,326.48 153.99,321.16 154.25,315.92 154.50,310.75 154.75,305.66 155.01,300.65 155.26,295.74 155.52,290.92 155.77,286.19 156.03,281.57 156.28,277.06 156.54,272.65 156.79,268.36 157.05,264.17 157.30,260.10 157.55,264.45 157.81,268.92 158.06,273.52 158.31,278.25 158.57,283.10 158.82,288.06 159.08,293.15 159.33,298.34 159.58,303.64 159.84,309.04 160.09,314.53 160.34,320.11 160.60,325.77 160.85,331.49 161.10,337.28 161.36,343.12 161.61,349.00 161.87,354.92 162.12,360.86 162.37,366.82 162.63,372.78 162.88,378.74 163.13,384.68 163.39,390.60 163.64,396.48 163.90,402.32 164.15,408.11 164.40,413.83 164.66,419.49 164.91,425.07 165.16,430.56 165.42,435.96 165.67,441.26 165.92,446.45 166.18,451.54 166.43,456.50 166.69,461.35 166.94,466.08 167.19,470.68 167.45,475.15 167.70,479.50 167.95,475.26 168.20,470.90 168.46,466.41 168.71,461.81 168.96,457.09 169.21,452.25 169.47,447.31 169.72,442.26 169.97,437.10 170.22,431.85 170.48,426.51 170.73,421.09 170.98,415.59 171.23,410.02 171.49,404.39 171.74,398.71 171.99,392.98 172.24,387.22 172.50,381.43 172.75,375.62 173.00,369.80 173.25,363.98 173.50,358.17 173.76,352.38 174.01,346.62 174.26,340.89 174.51,335.21 174.77,329.58 175.02,324.01 175.27,318.51 175.52,313.09 175.78,307.75 176.03,302.50 176.28,297.34 176.53,292.29 176.79,287.35 177.04,282.51 177.29,277.79 177.54,273.19 177.80,268.70 178.05,264.34 178.30,260.10 178.55,264.37 178.81,268.76 179.06,273.28 179.32,277.91 179.57,282.67 179.83,287.53 180.08,292.51 180.34,297.60 180.59,302.79 180.85,308.07 181.10,313.45 181.36,318.91 181.61,324.45 181.87,330.05 182.12,335.72 182.38,341.44 182.63,347.21 182.89,353.01 183.14,358.84 183.40,364.69 183.65,370.55 183.90,376.41 184.16,382.26 184.41,388.09 184.67,393.89 184.92,399.66 185.18,405.38 185.43,411.05 185.69,416.65 185.94,422.19 186.20,427.65 186.45,433.03 186.71,438.31 186.96,443.50 187.22,448.59 187.47,453.57 187.73,458.43 187.98,463.19 188.24,467.82 188.49,472.34 188.75,476.73 189.00,481.00 189.25,476.88 189.51,472.64 189.76,468.28 190.01,463.81 190.27,459.23 190.52,454.54 190.77,449.75 191.03,444.85 191.28,439.86 191.53,434.77 191.79,429.60 192.04,424.35 192.30,419.02 192.55,413.62 192.80,408.16 193.06,402.65 193.31,397.10 193.56,391.50 193.82,385.88 194.07,380.24 194.32,374.58 194.58,368.92 194.83,363.26 195.08,357.62 195.34,352.00 195.59,346.40 195.84,340.85 196.10,335.34 196.35,329.88 196.60,324.48 196.86,319.15 197.11,313.90 197.37,308.73 197.62,303.64 197.87,298.65 198.13,293.75 198.38,288.96 198.63,284.27 198.89,279.69 199.14,275.22 199.39,270.86 199.65,266.62 199.90,262.50 200.15,266.79 200.41,271.20 200.66,275.74 200.91,280.41 201.16,285.21 201.41,290.12 201.67,295.15 201.92,300.29 202.17,305.54 202.43,310.88 202.68,316.32 202.93,321.84 203.18,327.44 203.44,333.10 203.69,338.83 203.94,344.60 204.19,350.41 204.44,356.26 204.70,362.12 204.95,368.00 205.20,373.88 205.46,379.74 205.71,385.59 205.96,391.40 206.21,397.17 206.47,402.90 206.72,408.56 206.97,414.16 207.22,419.68 207.47,425.12 207.73,430.46 207.98,435.71 208.23,440.85 208.49,445.88 208.74,450.79 208.99,455.59 209.24,460.26 209.50,464.80 209.75,469.21 210.00,473.50 210.25,469.33 210.51,465.04 210.76,460.61 211.01,456.05 211.26,451.37 211.52,446.56 211.77,441.64 212.02,436.60 212.27,431.46 212.53,426.23 212.78,420.90 213.03,415.49 213.28,410.01 213.54,404.47 213.79,398.87 214.04,393.23 214.29,387.55 214.55,381.86 214.80,376.15 215.05,370.44 215.31,364.75 215.56,359.07 215.81,353.43 216.06,347.83 216.32,342.29 216.57,336.81 216.82,331.40 217.07,326.07 217.33,320.84 217.58,315.70 217.83,310.66 218.08,305.74 218.34,300.93 218.59,296.25 218.84,291.69 219.09,287.26 219.35,282.97 219.60,278.80 219.85,282.71 220.11,286.76 220.36,290.93 220.62,295.22 220.87,299.64 221.12,304.17 221.38,308.81 221.63,313.56 221.89,318.41 222.14,323.35 222.39,328.38 222.65,333.48 222.90,338.65 223.16,343.88 223.41,349.16 223.66,354.47 223.92,359.81 224.17,365.17 224.43,370.53 224.68,375.89 224.94,381.23 225.19,386.54 225.44,391.82 225.70,397.05 225.95,402.22 226.21,407.32 226.46,412.35 226.71,417.29 226.97,422.14 227.22,426.89 227.48,431.53 227.73,436.06 227.98,440.48 228.24,444.77 228.49,448.94 228.75,452.99 229.00,456.90 229.25,452.71 229.51,448.37 229.76,443.87 230.02,439.23 230.27,434.44 230.53,429.52 230.78,424.47 231.04,419.30 231.29,414.02 231.55,408.63 231.80,403.16 232.05,397.61 232.31,392.00 232.56,386.34 232.82,380.64 233.07,374.91 233.33,369.19 233.58,363.46 233.84,357.76 234.09,352.10 234.35,346.49 234.60,340.94 234.85,335.47 235.11,330.08 235.36,324.80 235.62,319.63 235.87,314.58 236.13,309.66 236.38,304.87 236.64,300.23 236.89,295.73 237.15,291.39 237.40,287.20 237.65,291.05 237.91,295.04 238.16,299.16 238.41,303.42 238.66,307.80 238.92,312.31 239.17,316.93 239.42,321.66 239.68,326.50 239.93,331.42 240.18,336.43 240.44,341.51 240.69,346.66 240.94,351.85 241.19,357.08 241.45,362.33 241.70,367.60 241.95,372.87 242.21,378.12 242.46,383.35 242.71,388.54 242.96,393.69 243.22,398.77 243.47,403.78 243.72,408.70 243.98,413.54 244.23,418.27 244.48,422.89 244.74,427.40 244.99,431.78 245.24,436.04 245.49,440.16 245.75,444.15 246.00,448.00 246.25,443.75 246.50,439.32 246.75,434.71 247.00,429.93 247.25,424.98 247.50,419.88 247.75,414.64 248.00,409.26 248.25,403.78 248.50,398.19 248.75,392.53 249.00,386.80 249.25,381.04 249.50,375.25 249.75,369.46 250.00,363.70 250.25,357.97 250.50,352.31 250.75,346.72 251.00,341.24 251.25,335.86 251.50,330.62 251.75,325.52 252.00,320.57 252.25,315.79 252.50,311.18 252.75,306.75 253.00,302.50 253.26,306.27 253.51,310.19 253.77,314.28 254.03,318.52 254.29,322.91 254.54,327.43 254.80,332.08 255.06,336.84 255.31,341.71 255.57,346.66 255.83,351.68 256.09,356.76 256.34,361.87 256.60,367.00 256.86,372.13 257.11,377.24 257.37,382.32 257.63,387.34 257.89,392.29 258.14,397.16 258.40,401.92 258.66,406.57 258.91,411.09 259.17,415.48 259.43,419.72 259.69,423.81 259.94,427.73 260.20,431.50 260.46,427.85 260.71,424.03 260.97,420.03 261.22,415.88 261.48,411.57 261.74,407.11 261.99,402.53 262.25,397.84 262.50,393.05 262.76,388.19 263.02,383.28 263.27,378.33 263.53,373.37 263.78,368.42 264.04,363.51 264.30,358.65 264.55,353.86 264.81,349.17 265.06,344.59 265.32,340.13 265.58,335.82 265.83,331.67 266.09,327.67 266.34,323.85 266.60,320.20 266.86,323.97 267.11,327.95 267.37,332.13 267.63,336.51 267.89,341.07 268.14,345.78 268.40,350.63 268.66,355.59 268.91,360.62 269.17,365.70 269.43,370.80 269.69,375.88 269.94,380.91 270.20,385.87 270.46,390.72 270.71,395.43 270.97,399.99 271.23,404.37 271.49,408.55 271.74,412.53 272.00,416.30 272.26,412.70 272.52,408.86 272.78,404.80 273.04,400.53 273.31,396.08 273.57,391.47 273.83,386.75 274.09,381.95 274.35,377.10 274.61,372.25 274.87,367.45 275.13,362.73 275.39,358.12 275.66,353.67 275.92,349.40 276.18,345.34 276.44,341.50 276.70,337.90 276.95,340.61 277.21,343.51 277.46,346.58 277.71,349.82 277.96,353.19 278.22,356.68 278.47,360.25 278.72,363.88 278.98,367.52 279.23,371.15 279.48,374.72 279.74,378.21 279.99,381.58 280.24,384.82 280.49,387.89 280.75,390.79 281.00,393.50 281.25,389.41 281.50,384.79 281.75,379.75 282.00,374.50 282.25,369.25 282.50,364.21 282.75,359.59 283.00,355.50 283.25,357.25 283.50,359.17 283.75,361.23 284.00,363.42 284.25,365.69 284.50,368.00 284.75,370.31 285.00,372.58 285.25,374.77 285.50,376.83 285.75,378.75 286.00,380.50 286.25,378.56 286.50,376.37 286.75,373.99 287.00,371.50 287.25,369.01 287.50,366.63 287.75,364.44 288.00,362.50 288.25,364.01 288.50,365.71 288.75,367.56 289.00,369.50 289.25,371.44 289.50,373.29 289.75,374.99 290.00,376.50 290.25,375.91 290.50,375.24 290.75,374.51 291.00,373.75 291.25,372.99 291.50,372.26 291.75,371.59 292.00,371.00" fill="none" stroke="#0000e0" stroke-width="1" />
<rect x="288" y="370" width="412" height="2" fill="#0000e0"/>
<rect x="287" y="367" width="1" height="3" fill="#0000e0"/><rect x="288" y="369" width="1" height="1" fill="#0000e0"/><rect x="287" y="371" width="1" height="1" fill="#e00000"/>
<rect x="294" y="367" width="1" height="3" fill="#0000e0"/><rect x="295" y="369" width="1" height="1" fill="#0000e0"/><rect x="294" y="371" width="1" height="1" fill="#e00000"/>
<rect x="300" y="367" width="1" height="3" fill="#0000e0"/><rect x="301" y="369" width="1" height="1" fill="#0000e0"/><rect x="300" y="371" width="1" height="1" fill="#e00000"/>
<rect x="312" y="367" width="1" height="3" fill="#0000e0"/><rect x="313" y="369" width="1" height="1" fill="#0000e0"/><rect x="312" y="371" width="1" height="1" fill="#e00000"/>
<rect x="326" y="367" width="1" height="3" fill="#0000e0"/><rect x="327" y="369" width="1" height="1" fill="#0000e0"/><rect x="326" y="371" width="1" height="1" fill="#e00000"/>
<rect x="340" y="367" width="1" height="3" fill="#0000e0"/><rect x="341" y="369" width="1" height="1" fill="#0000e0"/><rect x="340" y="371" width="1" height="1" fill="#e00000"/>
<rect x="353" y="367" width="1" height="3" fill="#0000e0"/><rect x="354" y="369" width="1" height="1" fill="#0000e0"/><rect x="353" y="371" width="1" height="1" fill="#e00000"/>
<rect x="366" y="367" width="1" height="3" fill="#0000e0"/><rect x="367" y="369" width="1" height="1" fill="#0000e0"/><rect x="366" y="371" width="1" height="1" fill="#e00000"/>
<rect x="380" y="367" width="1" height="3" fill="#0000e0"/><rect x="381" y="369" width="1" height="1" fill="#0000e0"/><rect x="380" y="371" width="1" height="1" fill="#e00000"/>
<rect x="393" y="367" width="1" height="3" fill="#0000e0"/><rect x="394" y="369" width="1" height="1" fill="#0000e0"/><rect x="393" y="371" width="1" height="1" fill="#e00000"/>
<rect x="406" y="367" width="1" height="3" fill="#0000e0"/><rect x="407" y="369" width="1" height="1" fill="#0000e0"/><rect x="406" y="371" width="1" height="1" fill="#e00000"/>
<rect x="421" y="367" width="1" height="3" fill="#0000e0"/><rect x="422" y="369" width="1" height="1" fill="#0000e0"/><rect x="421" y="371" width="1" height="1" fill="#e00000"/>
<rect x="434" y="367" width="1" height="3" fill="#0000e0"/><rect x="435" y="369" width="1" height="1" fill="#0000e0"/><rect x="434" y="371" width="1" height="1" fill="#e00000"/>
<rect x="448" y="367" width="1" height="3" fill="#0000e0"/><rect x="449" y="369" width="1" height="1" fill="#0000e0"/><rect x="448" y="371" width="1" height="1" fill="#e00000"/>
<rect x="461" y="367" width="1" height="3" fill="#0000e0"/><rect x="462" y="369" width="1" height="1" fill="#0000e0"/><rect x="461" y="371" width="1" height="1" fill="#e00000"/>
<rect x="474" y="367" width="1" height="3" fill="#0000e0"/><rect x="475" y="369" width="1" height="1" fill="#0000e0"/><rect x="474" y="371" width="1" height="1" fill="#e00000"/>
<rect x="488" y="367" width="1" height="3" fill="#0000e0"/><rect x="489" y="369" width="1" height="1" fill="#0000e0"/><rect x="488" y="371" width="1" height="1" fill="#e00000"/>
<rect x="502" y="367" width="1" height="3" fill="#0000e0"/><rect x="503" y="369" width="1" height="1" fill="#0000e0"/><rect x="502" y="371" width="1" height="1" fill="#e00000"/>
<rect x="516" y="367" width="1" height="3" fill="#0000e0"/><rect x="517" y="369" width="1" height="1" fill="#0000e0"/><rect x="516" y="371" width="1" height="1" fill="#e00000"/>
<rect x="529" y="367" width="1" height="3" fill="#0000e0"/><rect x="530" y="369" width="1" height="1" fill="#0000e0"/><rect x="529" y="371" width="1" height="1" fill="#e00000"/>
<rect x="543" y="367" width="1" height="3" fill="#0000e0"/><rect x="544" y="369" width="1" height="1" fill="#0000e0"/><rect x="543" y="371" width="1" height="1" fill="#e00000"/>
<rect x="557" y="367" width="1" height="3" fill="#0000e0"/><rect x="558" y="369" width="1" height="1" fill="#0000e0"/><rect x="557" y="371" width="1" height="1" fill="#e00000"/>
<rect x="571" y="367" width="1" height="3" fill="#0000e0"/><rect x="572" y="369" width="1" height="1" fill="#0000e0"/><rect x="571" y="371" width="1" height="1" fill="#e00000"/>
<rect x="586" y="367" width="1" height="3" fill="#0000e0"/><rect x="587" y="369" width="1" height="1" fill="#0000e0"/><rect x="586" y="371" width="1" height="1" fill="#e00000"/>
<rect x="600" y="367" width="1" height="3" fill="#0000e0"/><rect x="601" y="369" width="1" height="1" fill="#0000e0"/><rect x="600" y="371" width="1" height="1" fill="#e00000"/>
<rect x="614" y="367" width="1" height="3" fill="#0000e0"/><rect x="615" y="369" width="1" height="1" fill="#0000e0"/><rect x="614" y="371" width="1" height="1" fill="#e00000"/>
<rect x="628" y="367" width="1" height="3" fill="#0000e0"/><rect x="629" y="369" width="1" height="1" fill="#0000e0"/><rect x="628" y="371" width="1" height="1" fill="#e00000"/>
<rect x="643" y="367" width="1" height="3" fill="#0000e0"/><rect x="644" y="369" width="1" height="1" fill="#0000e0"/><rect x="643" y="371" width="1" height="1" fill="#e00000"/>
<rect x="658" y="367" width="1" height="3" fill="#0000e0"/><rect x="659" y="369" width="1" height="1" fill="#0000e0"/><rect x="658" y="371" width="1" height="1" fill="#e00000"/>
<rect x="673" y="367" width="1" height="3" fill="#0000e0"/><rect x="674" y="369" width="1" height="1" fill="#0000e0"/><rect x="673" y="371" width="1" height="1" fill="#e00000"/>
<rect x="688" y="367" width="1" height="3" fill="#0000e0"/><rect x="689" y="369" width="1" height="1" fill="#0000e0"/><rect x="688" y="371" width="1" height="1" fill="#e00000"/>
<polyline points="11.00,484.50 11.30,483.74 11.69,482.76 12.15,481.60 12.67,480.29 13.22,478.89 13.81,477.42 14.40,475.92 14.99,474.44 15.57,473.02 16.11,471.69 16.60,470.50 17.16,469.19 17.70,467.98 18.23,466.84 18.75,465.74 19.26,464.66 19.76,463.57 20.24,462.45 20.73,461.27 21.20,460.00 21.79,458.27 22.34,456.48 22.88,454.63 23.42,452.73 23.96,450.79 24.51,448.81 25.10,446.80 25.58,445.22 26.08,443.61 26.60,441.99 27.12,440.33 27.65,438.66 28.18,436.96 28.70,435.23 29.21,433.48 29.70,431.70 30.23,429.68 30.75,427.64 31.25,425.57 31.75,423.47 32.25,421.32 32.75,419.12 33.27,416.85 33.80,414.50 34.29,412.33 34.78,410.09 35.28,407.78 35.78,405.43 36.29,403.04 36.81,400.64 37.33,398.24 37.86,395.85 38.40,393.50 38.91,391.31 39.47,388.96 40.05,386.54 40.65,384.09 41.24,381.69 41.80,379.39 42.33,377.26 42.80,375.36 43.19,373.75 43.50,372.50 43.50,372.50 43.76,372.20 44.01,371.84 44.27,371.43 44.53,370.96 44.78,370.44 45.04,369.88 45.30,369.27 45.55,368.64 45.81,367.98 46.07,367.29 46.32,366.60 46.58,365.90 46.83,365.21 47.09,364.52 47.35,363.86 47.60,363.23 47.86,362.62 48.12,362.06 48.37,361.54 48.63,361.07 48.89,360.66 49.14,360.30 49.40,360.00 49.65,360.40 49.91,360.85 50.16,361.37 50.41,361.94 50.67,362.57 50.92,363.25 51.17,363.98 51.43,364.75 51.68,365.57 51.93,366.42 52.19,367.30 52.44,368.20 52.69,369.12 52.95,370.06 53.20,371.00 53.45,371.94 53.71,372.88 53.96,373.80 54.21,374.70 54.47,375.58 54.72,376.43 54.97,377.25 55.23,378.02 55.48,378.75 55.73,379.43 55.99,380.06 56.24,380.63 56.49,381.15 56.75,381.60 57.00,382.00 57.25,381.57 57.50,381.06 57.76,380.48 58.01,379.84 58.26,379.13 58.51,378.35 58.76,377.53 59.01,376.65 59.27,375.73 59.52,374.77 59.77,373.79 60.02,372.78 60.27,371.76 60.53,370.74 60.78,369.72 61.03,368.71 61.28,367.73 61.53,366.77 61.79,365.85 62.04,364.97 62.29,364.15 62.54,363.37 62.79,362.66 63.04,362.02 63.30,361.44 63.55,360.93 63.80,360.50 64.05,360.94 64.30,361.46 64.56,362.05 64.81,362.71 65.06,363.44 65.31,364.23 65.56,365.08 65.81,365.97 66.07,366.92 66.32,367.90 66.57,368.90 66.82,369.93 67.07,370.98 67.33,372.02 67.58,373.07 67.83,374.10 68.08,375.10 68.33,376.08 68.59,377.03 68.84,377.92 69.09,378.77 69.34,379.56 69.59,380.29 69.84,380.95 70.10,381.54 70.35,382.06 70.60,382.50 70.85,382.08 71.11,381.60 71.36,381.05 71.61,380.44 71.87,379.78 72.12,379.06 72.37,378.29 72.63,377.47 72.88,376.60 73.13,375.70 73.39,374.77 73.64,373.82 73.89,372.84 74.15,371.85 74.40,370.85 74.65,369.85 74.91,368.86 75.16,367.88 75.41,366.93 75.67,366.00 75.92,365.10 76.17,364.23 76.43,363.41 76.68,362.64 76.93,361.92 77.19,361.26 77.44,360.65 77.69,360.10 77.95,359.62 78.20,359.20 78.45,359.72 78.71,360.31 78.96,360.99 79.21,361.73 79.47,362.55 79.72,363.44 79.97,364.39 80.23,365.40 80.48,366.46 80.73,367.57 80.99,368.72 81.24,369.90 81.49,371.10 81.75,372.32 82.00,373.55 82.25,374.78 82.51,376.00 82.76,377.20 83.01,378.38 83.27,379.53 83.52,380.64 83.77,381.70 84.03,382.71 84.28,383.66 84.53,384.55 84.79,385.37 85.04,386.11 85.29,386.79 85.55,387.38 85.80,387.90 86.05,387.29 86.31,386.59 86.56,385.80 86.81,384.93 87.07,383.98 87.32,382.95 87.57,381.85 87.83,380.68 88.08,379.45 88.33,378.17 88.58,376.83 88.84,375.46 89.09,374.05 89.34,372.61 89.60,371.16 89.85,369.70 90.10,368.24 90.36,366.79 90.61,365.35 90.86,363.94 91.12,362.57 91.37,361.23 91.62,359.95 91.88,358.72 92.13,357.55 92.38,356.45 92.63,355.42 92.89,354.47 93.14,353.60 93.39,352.81 93.65,352.11 93.90,351.50 94.15,352.15 94.41,352.89 94.66,353.71 94.92,354.62 95.17,355.62 95.43,356.70 95.68,357.85 95.94,359.07 96.19,360.36 96.45,361.71 96.70,363.11 96.95,364.55 97.21,366.04 97.46,367.55 97.72,369.08 97.97,370.63 98.23,372.17 98.48,373.72 98.74,375.25 98.99,376.76 99.25,378.25 99.50,379.69 99.75,381.09 100.01,382.44 100.26,383.73 100.52,384.95 100.77,386.10 101.03,387.18 101.28,388.18 101.54,389.09 101.79,389.91 102.05,390.65 102.30,391.30 102.56,390.67 102.81,389.96 103.07,389.16 103.32,388.29 103.58,387.33 103.84,386.30 104.09,385.19 104.35,384.02 104.60,382.79 104.86,381.49 105.11,380.15 105.37,378.76 105.63,377.34 105.88,375.88 106.14,374.40 106.39,372.90 106.65,371.40 106.91,369.90 107.16,368.40 107.42,366.92 107.67,365.46 107.93,364.04 108.19,362.65 108.44,361.31 108.70,360.01 108.95,358.78 109.21,357.61 109.46,356.50 109.72,355.47 109.98,354.51 110.23,353.64 110.49,352.84 110.74,352.13 111.00,351.50 111.25,352.21 111.51,353.01 111.76,353.90 112.01,354.89 112.26,355.97 112.52,357.13 112.77,358.37 113.02,359.69 113.28,361.08 113.53,362.54 113.78,364.05 114.04,365.61 114.29,367.22 114.54,368.86 114.79,370.52 115.05,372.21 115.30,373.90 115.55,375.59 115.81,377.28 116.06,378.94 116.31,380.58 116.56,382.19 116.82,383.75 117.07,385.26 117.32,386.72 117.58,388.11 117.83,389.43 118.08,390.67 118.34,391.83 118.59,392.91 118.84,393.90 119.09,394.79 119.35,395.59 119.60,396.30 119.85,395.64 120.11,394.91 120.36,394.11 120.61,393.23 120.87,392.28 121.12,391.26 121.38,390.18 121.63,389.03 121.88,387.82 122.14,386.56 122.39,385.24 122.64,383.86 122.90,382.45 123.15,380.99 123.40,379.50 123.66,377.98 123.91,376.43 124.17,374.87 124.42,373.29 124.67,371.70 124.93,370.10 125.18,368.51 125.43,366.93 125.69,365.37 125.94,363.82 126.20,362.30 126.45,360.81 126.70,359.35 126.96,357.94 127.21,356.56 127.46,355.24 127.72,353.98 127.97,352.77 128.22,351.62 128.48,350.54 128.73,349.52 128.99,348.57 129.24,347.69 129.49,346.89 129.75,346.16 130.00,345.50 130.25,346.25 130.51,347.09 130.76,348.01 131.02,349.03 131.27,350.13 131.52,351.31 131.78,352.56 132.03,353.90 132.28,355.30 132.54,356.78 132.79,358.31 133.05,359.90 133.30,361.54 133.55,363.23 133.81,364.95 134.06,366.71 134.32,368.49 134.57,370.28 134.82,372.09 135.08,373.91 135.33,375.72 135.58,377.51 135.84,379.29 136.09,381.05 136.35,382.77 136.60,384.46 136.85,386.10 137.11,387.69 137.36,389.22 137.62,390.70 137.87,392.10 138.12,393.44 138.38,394.69 138.63,395.87 138.88,396.97 139.14,397.99 139.39,398.91 139.65,399.75 139.90,400.50 140.15,399.84 140.41,399.12 140.66,398.32 140.92,397.47 141.17,396.55 141.43,395.56 141.68,394.51 141.93,393.41 142.19,392.24 142.44,391.03 142.70,389.76 142.95,388.44 143.21,387.07 143.46,385.66 143.72,384.22 143.97,382.74 144.22,381.23 144.48,379.69 144.73,378.13 144.99,376.55 145.24,374.96 145.50,373.36 145.75,371.75 146.00,370.14 146.26,368.54 146.51,366.95 146.77,365.37 147.02,363.81 147.28,362.27 147.53,360.76 147.78,359.28 148.04,357.84 148.29,356.43 148.55,355.06 148.80,353.74 149.06,352.47 149.31,351.26 149.57,350.09 149.82,348.99 150.07,347.94 150.33,346.95 150.58,346.03 150.84,345.18 151.09,344.38 151.35,343.66 151.60,343.00 151.85,343.64 152.10,344.34 152.35,345.11 152.60,345.95 152.86,346.85 153.11,347.81 153.36,348.83 153.61,349.91 153.86,351.05 154.11,352.24 154.36,353.49 154.61,354.77 154.86,356.11 155.12,357.48 155.37,358.90 155.62,360.34 155.87,361.82 156.12,363.31 156.37,364.83 156.62,366.37 156.87,367.92 157.12,369.47 157.38,371.03 157.63,372.58 157.88,374.13 158.13,375.67 158.38,377.19 158.63,378.68 158.88,380.16 159.13,381.60 159.38,383.02 159.64,384.39 159.89,385.73 160.14,387.01 160.39,388.26 160.64,389.45 160.89,390.59 161.14,391.67 161.39,392.69 161.64,393.65 161.90,394.55 162.15,395.39 162.40,396.16 162.65,396.86 162.90,397.50 163.15,396.90 163.41,396.23 163.66,395.50 163.91,394.70 164.17,393.84 164.42,392.92 164.67,391.94 164.93,390.91 165.18,389.82 165.43,388.68 165.69,387.48 165.94,386.25 166.20,384.97 166.45,383.65 166.70,382.30 166.96,380.92 167.21,379.52 167.46,378.09 167.72,376.65 167.97,375.19 168.22,373.73 168.48,372.27 168.73,370.81 168.98,369.35 169.24,367.91 169.49,366.48 169.74,365.08 170.00,363.70 170.25,362.35 170.50,361.03 170.76,359.75 171.01,358.52 171.27,357.32 171.52,356.18 171.77,355.09 172.03,354.06 172.28,353.08 172.53,352.16 172.79,351.30 173.04,350.50 173.29,349.77 173.55,349.10 173.80,348.50 174.05,349.09 174.30,349.75 174.56,350.47 174.81,351.26 175.06,352.11 175.31,353.02 175.57,353.99 175.82,355.02 176.07,356.10 176.32,357.23 176.58,358.41 176.83,359.64 177.08,360.90 177.33,362.21 177.59,363.54 177.84,364.91 178.09,366.30 178.34,367.71 178.60,369.13 178.85,370.56 179.10,372.00 179.35,373.44 179.60,374.87 179.86,376.29 180.11,377.70 180.36,379.09 180.61,380.46 180.87,381.79 181.12,383.10 181.37,384.36 181.62,385.59 181.88,386.77 182.13,387.90 182.38,388.98 182.63,390.01 182.89,390.98 183.14,391.89 183.39,392.74 183.64,393.53 183.90,394.25 184.15,394.91 184.40,395.50 184.65,394.93 184.91,394.31 185.16,393.62 185.41,392.87 185.67,392.07 185.92,391.20 186.17,390.28 186.43,389.31 186.68,388.29 186.93,387.22 187.19,386.10 187.44,384.94 187.70,383.74 187.95,382.50 188.20,381.24 188.46,379.94 188.71,378.62 188.96,377.28 189.22,375.93 189.47,374.56 189.72,373.19 189.98,371.81 190.23,370.44 190.48,369.07 190.74,367.72 190.99,366.38 191.24,365.06 191.50,363.76 191.75,362.50 192.00,361.26 192.26,360.06 192.51,358.90 192.77,357.78 193.02,356.71 193.27,355.69 193.53,354.72 193.78,353.80 194.03,352.93 194.29,352.13 194.54,351.38 194.79,350.69 195.05,350.07 195.30,349.50 195.55,350.02 195.81,350.60 196.06,351.23 196.32,351.93 196.57,352.67 196.83,353.47 197.08,354.32 197.34,355.23 197.59,356.18 197.85,357.17 198.10,358.21 198.36,359.29 198.61,360.40 198.87,361.55 199.12,362.72 199.38,363.92 199.63,365.14 199.89,366.38 200.14,367.63 200.40,368.89 200.65,370.15 200.90,371.41 201.16,372.67 201.41,373.92 201.67,375.16 201.92,376.38 202.18,377.58 202.43,378.75 202.69,379.90 202.94,381.01 203.20,382.09 203.45,383.13 203.71,384.12 203.96,385.07 204.22,385.98 204.47,386.83 204.73,387.63 204.98,388.37 205.24,389.07 205.49,389.70 205.75,390.28 206.00,390.80 206.25,390.34 206.50,389.83 206.75,389.26 207.00,388.64 207.25,387.97 207.50,387.25 207.75,386.49 208.00,385.67 208.25,384.82 208.50,383.92 208.75,382.99 209.00,382.02 209.25,381.02 209.50,379.99 209.75,378.94 210.00,377.87 210.25,376.78 210.50,375.67 210.75,374.56 211.00,373.45 211.25,372.34 211.50,371.23 211.75,370.12 212.00,369.03 212.25,367.96 212.50,366.91 212.75,365.88 213.00,364.88 213.25,363.91 213.50,362.98 213.75,362.08 214.00,361.23 214.25,360.41 214.50,359.65 214.75,358.93 215.00,358.26 215.25,357.64 215.50,357.07 215.75,356.56 216.00,356.10 216.25,356.47 216.51,356.89 216.76,357.34 217.02,357.84 217.27,358.39 217.52,358.97 217.78,359.59 218.03,360.25 218.28,360.95 218.54,361.68 218.79,362.44 219.05,363.22 219.30,364.03 219.55,364.87 219.81,365.72 220.06,366.59 220.32,367.47 220.57,368.36 220.82,369.25 221.08,370.15 221.33,371.04 221.58,371.93 221.84,372.81 222.09,373.68 222.35,374.53 222.60,375.37 222.85,376.18 223.11,376.96 223.36,377.72 223.62,378.45 223.87,379.15 224.12,379.81 224.38,380.43 224.63,381.01 224.88,381.56 225.14,382.06 225.39,382.51 225.65,382.93 225.90,383.30 226.15,382.97 226.40,382.59 226.65,382.17 226.91,381.71 227.16,381.20 227.41,380.66 227.66,380.08 227.91,379.46 228.16,378.81 228.41,378.13 228.67,377.43 228.92,376.70 229.17,375.94 229.42,375.17 229.67,374.39 229.92,373.60 230.17,372.80 230.43,372.00 230.68,371.20 230.93,370.41 231.18,369.63 231.43,368.86 231.68,368.10 231.93,367.37 232.19,366.67 232.44,365.99 232.69,365.34 232.94,364.72 233.19,364.14 233.44,363.60 233.69,363.09 233.95,362.63 234.20,362.21 234.45,361.83 234.70,361.50 234.95,361.83 235.20,362.20 235.45,362.61 235.71,363.07 235.96,363.57 236.21,364.11 236.46,364.69 236.71,365.31 236.96,365.95 237.22,366.63 237.47,367.33 237.72,368.06 237.97,368.80 238.22,369.56 238.47,370.33 238.72,371.11 238.98,371.89 239.23,372.67 239.48,373.44 239.73,374.20 239.98,374.94 240.23,375.67 240.48,376.37 240.74,377.05 240.99,377.69 241.24,378.31 241.49,378.89 241.74,379.43 241.99,379.93 242.25,380.39 242.50,380.80 242.75,381.17 243.00,381.50 243.25,381.21 243.50,380.88 243.76,380.50 244.01,380.08 244.26,379.62 244.51,379.12 244.76,378.59 245.01,378.02 245.27,377.42 245.52,376.80 245.77,376.15 246.02,375.49 246.27,374.82 246.52,374.14 246.78,373.46 247.03,372.78 247.28,372.11 247.53,371.45 247.78,370.80 248.03,370.18 248.29,369.58 248.54,369.01 248.79,368.48 249.04,367.98 249.29,367.52 249.54,367.10 249.80,366.72 250.05,366.39 250.30,366.10 250.56,366.32 250.81,366.58 251.07,366.87 251.33,367.20 251.59,367.55 251.84,367.94 252.10,368.36 252.36,368.80 252.61,369.27 252.87,369.75 253.13,370.25 253.39,370.76 253.64,371.28 253.90,371.80 254.16,372.32 254.41,372.84 254.67,373.35 254.93,373.85 255.19,374.33 255.44,374.80 255.70,375.24 255.96,375.66 256.21,376.05 256.47,376.40 256.73,376.73 256.99,377.02 257.24,377.28 257.50,377.50 257.75,377.32 258.00,377.10 258.26,376.86 258.51,376.60 258.76,376.30 259.01,375.99 259.26,375.65 259.51,375.28 259.77,374.90 260.02,374.51 260.27,374.10 260.52,373.68 260.77,373.25 261.02,372.82 261.28,372.38 261.53,371.95 261.78,371.52 262.03,371.10 262.28,370.69 262.53,370.30 262.79,369.92 263.04,369.55 263.29,369.21 263.54,368.90 263.79,368.60 264.04,368.34 264.30,368.10 264.55,367.88 264.80,367.70 265.06,367.90 265.32,368.13 265.58,368.41 265.84,368.72 266.10,369.06 266.35,369.44 266.61,369.84 266.87,370.26 267.13,370.70 267.39,371.15 267.65,371.60 267.91,372.05 268.17,372.50 268.43,372.94 268.69,373.36 268.95,373.76 269.20,374.14 269.46,374.48 269.72,374.79 269.98,375.07 270.24,375.30 270.50,375.50 270.75,375.35 271.01,375.18 271.26,374.97 271.52,374.73 271.77,374.47 272.03,374.18 272.29,373.88 272.54,373.56 272.80,373.23 273.05,372.90 273.31,372.57 273.56,372.24 273.81,371.92 274.07,371.62 274.33,371.33 274.58,371.07 274.84,370.83 275.09,370.62 275.35,370.45 275.60,370.30 275.86,370.41 276.12,370.54 276.38,370.70 276.64,370.89 276.89,371.09 277.15,371.31 277.41,371.54 277.67,371.78 277.93,372.02 278.19,372.26 278.45,372.49 278.71,372.71 278.96,372.91 279.22,373.10 279.48,373.26 279.74,373.39 280.00,373.50 280.25,373.44 280.50,373.38 280.75,373.30 281.00,373.20 281.25,373.10 281.50,372.99 281.75,372.88 282.00,372.75 282.25,372.63 282.50,372.50 282.75,372.37 283.00,372.25 283.25,372.12 283.50,372.01 283.75,371.90 284.00,371.80 284.25,371.70 284.50,371.62 284.75,371.56 285.00,371.50" fill="none" stroke="#e00000" stroke-width="1" />
<polyline points="11.00,257.50 11.29,257.87 11.67,258.24 12.12,258.75 12.67,259.54 13.29,260.74 14.00,262.50 14.38,263.61 14.78,264.84 15.20,266.19 15.63,267.65 16.08,269.21 16.56,270.88 17.06,272.63 17.59,274.46 18.15,276.38 18.73,278.36 19.35,280.40 20.00,282.50 20.41,283.78 20.83,285.07 21.27,286.38 21.72,287.71 22.19,289.05 22.67,290.42 23.15,291.82 23.65,293.24 24.16,294.70 24.67,296.19 25.19,297.71 25.71,299.28 26.24,300.88 26.78,302.53 27.31,304.23 27.85,305.97 28.39,307.77 28.93,309.62 29.47,311.53 30.00,313.50 30.49,315.39 31.01,317.42 31.54,319.58 32.09,321.84 32.64,324.19 33.21,326.62 33.78,329.11 34.36,331.63 34.94,334.19 35.51,336.75 36.08,339.31 36.64,341.85 37.20,344.35 37.74,346.80 38.27,349.17 38.77,351.46 39.26,353.65 39.73,355.72 40.17,357.66 40.58,359.44 40.95,361.06 41.30,362.50 42.30,366.45 42.96,368.80 43.39,370.06 43.71,370.76 44.01,371.40 44.40,372.50 44.96,374.28 45.49,375.99 46.00,377.61 46.50,379.12 47.00,380.50 47.67,382.08 48.36,383.50 48.97,384.67 49.40,385.50 49.65,385.14 49.90,384.73 50.15,384.28 50.41,383.79 50.66,383.26 50.91,382.68 51.16,382.06 51.41,381.41 51.66,380.72 51.91,380.00 52.16,379.25 52.42,378.47 52.67,377.67 52.92,376.85 53.17,376.01 53.42,375.16 53.67,374.30 53.92,373.43 54.18,372.57 54.43,371.70 54.68,370.84 54.93,369.99 55.18,369.15 55.43,368.33 55.68,367.53 55.94,366.75 56.19,366.00 56.44,365.28 56.69,364.59 56.94,363.94 57.19,363.32 57.44,362.74 57.69,362.21 57.95,361.72 58.20,361.27 58.45,360.86 58.70,360.50 58.95,360.94 59.20,361.46 59.46,362.05 59.71,362.71 59.96,363.44 60.21,364.23 60.46,365.08 60.71,365.97 60.97,366.92 61.22,367.90 61.47,368.90 61.72,369.93 61.97,370.98 62.23,372.02 62.48,373.07 62.73,374.10 62.98,375.10 63.23,376.08 63.49,377.03 63.74,377.92 63.99,378.77 64.24,379.56 64.49,380.29 64.74,380.95 65.00,381.54 65.25,382.06 65.50,382.50 65.75,382.10 66.00,381.65 66.25,381.13 66.50,380.56 66.75,379.93 67.00,379.25 67.25,378.52 67.50,377.75 67.75,376.93 68.00,376.08 68.25,375.20 68.50,374.30 68.75,373.38 69.00,372.44 69.25,371.50 69.50,370.56 69.75,369.62 70.00,368.70 70.25,367.80 70.50,366.92 70.75,366.07 71.00,365.25 71.25,364.48 71.50,363.75 71.75,363.07 72.00,362.44 72.25,361.87 72.50,361.35 72.75,360.90 73.00,360.50 73.25,361.09 73.50,361.79 73.75,362.60 74.00,363.50 74.25,364.50 74.50,365.59 74.75,366.76 75.00,368.00 75.25,369.29 75.50,370.62 75.75,371.98 76.00,373.35 76.25,374.72 76.50,376.08 76.75,377.41 77.00,378.70 77.25,379.94 77.50,381.11 77.75,382.20 78.00,383.20 78.25,384.10 78.50,384.91 78.75,385.61 79.00,386.20 79.25,385.60 79.50,384.90 79.76,384.10 80.01,383.21 80.26,382.23 80.51,381.16 80.76,380.02 81.01,378.81 81.27,377.54 81.52,376.22 81.77,374.85 82.02,373.46 82.27,372.06 82.53,370.64 82.78,369.24 83.03,367.85 83.28,366.48 83.53,365.16 83.79,363.89 84.04,362.68 84.29,361.54 84.54,360.47 84.79,359.49 85.04,358.60 85.30,357.80 85.55,357.10 85.80,356.50 86.05,357.10 86.31,357.79 86.56,358.56 86.82,359.41 87.07,360.33 87.33,361.33 87.58,362.40 87.84,363.54 88.09,364.74 88.35,365.99 88.60,367.29 88.85,368.63 89.11,370.01 89.36,371.42 89.62,372.84 89.87,374.28 90.13,375.72 90.38,377.16 90.64,378.58 90.89,379.99 91.15,381.37 91.40,382.71 91.65,384.01 91.91,385.26 92.16,386.46 92.42,387.60 92.67,388.67 92.93,389.67 93.18,390.59 93.44,391.44 93.69,392.21 93.95,392.90 94.20,393.50 94.45,392.79 94.71,391.99 94.96,391.08 95.21,390.08 95.47,388.98 95.72,387.79 95.97,386.52 96.22,385.17 96.48,383.75 96.73,382.27 96.98,380.73 97.24,379.14 97.49,377.52 97.74,375.86 98.00,374.19 98.25,372.50 98.50,370.81 98.76,369.14 99.01,367.48 99.26,365.86 99.52,364.27 99.77,362.73 100.02,361.25 100.28,359.83 100.53,358.48 100.78,357.21 101.03,356.02 101.29,354.92 101.54,353.92 101.79,353.01 102.05,352.21 102.30,351.50 102.55,352.20 102.80,353.00 103.05,353.89 103.30,354.88 103.55,355.97 103.80,357.14 104.05,358.39 104.30,359.73 104.55,361.13 104.80,362.60 105.05,364.12 105.30,365.69 105.55,367.29 105.80,368.93 106.05,370.58 106.30,372.25 106.55,373.92 106.80,375.57 107.05,377.21 107.30,378.81 107.55,380.38 107.80,381.90 108.05,383.37 108.30,384.77 108.55,386.11 108.80,387.36 109.05,388.53 109.30,389.62 109.55,390.61 109.80,391.50 110.05,392.30 110.30,393.00 110.55,392.34 110.80,391.60 111.05,390.78 111.31,389.88 111.56,388.90 111.81,387.84 112.06,386.72 112.31,385.52 112.56,384.27 112.81,382.95 113.06,381.58 113.32,380.15 113.57,378.69 113.82,377.19 114.07,375.66 114.32,374.10 114.57,372.53 114.82,370.94 115.08,369.36 115.33,367.77 115.58,366.20 115.83,364.64 116.08,363.11 116.33,361.61 116.58,360.15 116.84,358.72 117.09,357.35 117.34,356.03 117.59,354.78 117.84,353.58 118.09,352.46 118.34,351.40 118.59,350.42 118.85,349.52 119.10,348.70 119.35,347.96 119.60,347.30 119.85,347.98 120.10,348.74 120.36,349.57 120.61,350.49 120.86,351.47 121.11,352.54 121.37,353.67 121.62,354.86 121.87,356.13 122.12,357.45 122.38,358.83 122.63,360.26 122.88,361.73 123.13,363.25 123.39,364.80 123.64,366.38 123.89,367.99 124.14,369.62 124.40,371.26 124.65,372.90 124.90,374.54 125.15,376.18 125.41,377.81 125.66,379.42 125.91,381.00 126.16,382.55 126.42,384.07 126.67,385.54 126.92,386.97 127.17,388.35 127.43,389.67 127.68,390.94 127.93,392.13 128.19,393.26 128.44,394.33 128.69,395.31 128.94,396.23 129.19,397.06 129.45,397.82 129.70,398.50 129.95,397.84 130.20,397.11 130.45,396.31 130.70,395.44 130.95,394.51 131.20,393.51 131.45,392.44 131.70,391.32 131.95,390.13 132.20,388.89 132.45,387.60 132.70,386.25 132.95,384.87 133.20,383.43 133.45,381.96 133.70,380.46 133.95,378.93 134.20,377.37 134.45,375.80 134.70,374.21 134.95,372.61 135.20,371.00 135.45,369.39 135.70,367.79 135.95,366.20 136.20,364.63 136.45,363.07 136.70,361.54 136.95,360.04 137.20,358.57 137.45,357.13 137.70,355.75 137.95,354.40 138.20,353.11 138.45,351.87 138.70,350.68 138.95,349.56 139.20,348.49 139.45,347.49 139.70,346.56 139.95,345.69 140.20,344.89 140.45,344.16 140.70,343.50 140.95,344.21 141.21,344.99 141.46,345.85 141.71,346.79 141.97,347.80 142.22,348.88 142.47,350.03 142.73,351.25 142.98,352.53 143.23,353.87 143.49,355.27 143.74,356.73 144.00,358.23 144.25,359.78 144.50,361.36 144.76,362.98 145.01,364.64 145.26,366.31 145.52,368.01 145.77,369.72 146.02,371.44 146.28,373.16 146.53,374.88 146.78,376.59 147.04,378.29 147.29,379.96 147.54,381.62 147.80,383.24 148.05,384.82 148.30,386.37 148.56,387.87 148.81,389.33 149.07,390.73 149.32,392.07 149.57,393.35 149.83,394.57 150.08,395.72 150.33,396.80 150.59,397.81 150.84,398.75 151.09,399.61 151.35,400.39 151.60,401.10 151.85,400.44 152.11,399.72 152.36,398.92 152.61,398.05 152.87,397.11 153.12,396.11 153.37,395.05 153.63,393.92 153.88,392.73 154.13,391.48 154.39,390.19 154.64,388.84 154.90,387.45 155.15,386.01 155.40,384.54 155.66,383.04 155.91,381.50 156.16,379.95 156.42,378.38 156.67,376.79 156.92,375.20 157.18,373.60 157.43,372.01 157.68,370.42 157.94,368.85 158.19,367.30 158.44,365.76 158.70,364.26 158.95,362.79 159.20,361.35 159.46,359.96 159.71,358.61 159.97,357.32 160.22,356.07 160.47,354.88 160.73,353.75 160.98,352.69 161.23,351.69 161.49,350.75 161.74,349.88 161.99,349.08 162.25,348.36 162.50,347.70 162.75,348.25 163.00,348.85 163.25,349.52 163.50,350.23 163.76,351.01 164.01,351.83 164.26,352.71 164.51,353.64 164.76,354.61 165.01,355.64 165.26,356.70 165.51,357.81 165.76,358.96 166.02,360.14 166.27,361.35 166.52,362.59 166.77,363.86 167.02,365.14 167.27,366.45 167.52,367.77 167.77,369.10 168.02,370.43 168.28,371.77 168.53,373.10 168.78,374.43 169.03,375.75 169.28,377.06 169.53,378.34 169.78,379.61 170.03,380.85 170.28,382.06 170.54,383.24 170.79,384.39 171.04,385.50 171.29,386.56 171.54,387.59 171.79,388.56 172.04,389.49 172.29,390.37 172.54,391.19 172.80,391.97 173.05,392.68 173.30,393.35 173.55,393.95 173.80,394.50 174.05,393.91 174.30,393.25 174.56,392.53 174.81,391.74 175.06,390.89 175.31,389.98 175.57,389.01 175.82,387.98 176.07,386.90 176.32,385.77 176.58,384.59 176.83,383.36 177.08,382.10 177.33,380.79 177.59,379.46 177.84,378.09 178.09,376.70 178.34,375.29 178.60,373.87 178.85,372.44 179.10,371.00 179.35,369.56 179.60,368.13 179.86,366.71 180.11,365.30 180.36,363.91 180.61,362.54 180.87,361.21 181.12,359.90 181.37,358.64 181.62,357.41 181.88,356.23 182.13,355.10 182.38,354.02 182.63,352.99 182.89,352.02 183.14,351.11 183.39,350.26 183.64,349.47 183.90,348.75 184.15,348.09 184.40,347.50 184.65,348.08 184.91,348.72 185.16,349.42 185.41,350.18 185.67,351.01 185.92,351.89 186.17,352.83 186.43,353.82 186.68,354.87 186.93,355.96 187.19,357.11 187.44,358.29 187.70,359.52 187.95,360.78 188.20,362.08 188.46,363.40 188.71,364.75 188.96,366.12 189.22,367.50 189.47,368.90 189.72,370.30 189.98,371.70 190.23,373.10 190.48,374.50 190.74,375.88 190.99,377.25 191.24,378.60 191.50,379.92 191.75,381.22 192.00,382.48 192.26,383.71 192.51,384.89 192.77,386.04 193.02,387.13 193.27,388.18 193.53,389.17 193.78,390.11 194.03,390.99 194.29,391.82 194.54,392.58 194.79,393.28 195.05,393.92 195.30,394.50 195.55,393.99 195.81,393.43 196.06,392.81 196.32,392.14 196.57,391.41 196.83,390.63 197.08,389.80 197.34,388.93 197.59,388.00 197.85,387.03 198.10,386.02 198.36,384.97 198.61,383.89 198.87,382.77 199.12,381.63 199.38,380.46 199.63,379.28 199.89,378.07 200.14,376.86 200.40,375.63 200.65,374.40 200.90,373.17 201.16,371.94 201.41,370.73 201.67,369.52 201.92,368.34 202.18,367.17 202.43,366.03 202.69,364.91 202.94,363.83 203.20,362.78 203.45,361.77 203.71,360.80 203.96,359.87 204.22,359.00 204.47,358.17 204.73,357.39 204.98,356.66 205.24,355.99 205.49,355.37 205.75,354.81 206.00,354.30 206.25,354.74 206.50,355.22 206.75,355.76 207.00,356.34 207.25,356.97 207.50,357.65 207.75,358.38 208.00,359.15 208.25,359.95 208.50,360.80 208.75,361.68 209.00,362.60 209.25,363.55 209.50,364.52 209.75,365.51 210.00,366.53 210.25,367.56 210.50,368.60 210.75,369.65 211.00,370.70 211.25,371.75 211.50,372.80 211.75,373.84 212.00,374.87 212.25,375.89 212.50,376.88 212.75,377.85 213.00,378.80 213.25,379.72 213.50,380.60 213.75,381.45 214.00,382.25 214.25,383.02 214.50,383.75 214.75,384.43 215.00,385.06 215.25,385.64 215.50,386.18 215.75,386.66 216.00,387.10 216.25,386.74 216.51,386.34 216.76,385.90 217.02,385.41 217.27,384.89 217.52,384.32 217.78,383.72 218.03,383.08 218.28,382.41 218.54,381.71 218.79,380.97 219.05,380.21 219.30,379.43 219.55,378.62 219.81,377.80 220.06,376.96 220.32,376.11 220.57,375.25 220.82,374.38 221.08,373.52 221.33,372.65 221.58,371.79 221.84,370.94 222.09,370.10 222.35,369.28 222.60,368.47 222.85,367.69 223.11,366.93 223.36,366.19 223.62,365.49 223.87,364.82 224.12,364.18 224.38,363.58 224.63,363.01 224.88,362.49 225.14,362.00 225.39,361.56 225.65,361.16 225.90,360.80 226.15,361.13 226.40,361.50 226.65,361.92 226.91,362.38 227.16,362.88 227.41,363.42 227.66,363.99 227.91,364.60 228.16,365.25 228.41,365.92 228.67,366.62 228.92,367.34 229.17,368.09 229.42,368.85 229.67,369.63 229.92,370.41 230.17,371.20 230.43,372.00 230.68,372.79 230.93,373.57 231.18,374.35 231.43,375.11 231.68,375.86 231.93,376.58 232.19,377.28 232.44,377.95 232.69,378.60 232.94,379.21 233.19,379.78 233.44,380.32 233.69,380.82 233.95,381.28 234.20,381.70 234.45,382.07 234.70,382.40 234.95,382.04 235.21,381.64 235.46,381.18 235.72,380.67 235.97,380.11 236.23,379.51 236.48,378.87 236.74,378.18 236.99,377.46 237.25,376.71 237.50,375.93 237.76,375.12 238.01,374.30 238.27,373.47 238.52,372.62 238.78,371.78 239.03,370.93 239.29,370.10 239.54,369.28 239.80,368.47 240.05,367.69 240.31,366.94 240.56,366.22 240.82,365.53 241.07,364.89 241.33,364.29 241.58,363.73 241.84,363.22 242.09,362.76 242.35,362.36 242.60,362.00 242.86,362.32 243.11,362.68 243.37,363.09 243.63,363.54 243.88,364.04 244.14,364.59 244.40,365.17 244.65,365.78 244.91,366.43 245.17,367.10 245.42,367.80 245.68,368.52 245.94,369.26 246.19,370.00 246.45,370.75 246.71,371.50 246.96,372.24 247.22,372.98 247.48,373.70 247.73,374.40 247.99,375.07 248.25,375.72 248.50,376.33 248.76,376.91 249.02,377.46 249.27,377.96 249.53,378.41 249.79,378.82 250.04,379.18 250.30,379.50 250.56,379.26 250.81,378.98 251.07,378.67 251.33,378.32 251.59,377.93 251.84,377.51 252.10,377.06 252.36,376.59 252.61,376.08 252.87,375.56 253.13,375.02 253.39,374.47 253.64,373.91 253.90,373.35 254.16,372.79 254.41,372.23 254.67,371.68 254.93,371.14 255.19,370.62 255.44,370.11 255.70,369.64 255.96,369.19 256.21,368.77 256.47,368.38 256.73,368.03 256.99,367.72 257.24,367.44 257.50,367.20 257.75,367.38 258.00,367.60 258.26,367.84 258.51,368.10 258.76,368.40 259.01,368.71 259.26,369.05 259.51,369.42 259.77,369.80 260.02,370.19 260.27,370.60 260.52,371.02 260.77,371.45 261.02,371.88 261.28,372.32 261.53,372.75 261.78,373.18 262.03,373.60 262.28,374.01 262.53,374.40 262.79,374.78 263.04,375.15 263.29,375.49 263.54,375.80 263.79,376.10 264.04,376.36 264.30,376.60 264.55,376.82 264.80,377.00 265.06,376.80 265.32,376.57 265.58,376.29 265.84,375.98 266.10,375.64 266.35,375.26 266.61,374.86 266.87,374.44 267.13,374.00 267.39,373.55 267.65,373.10 267.91,372.65 268.17,372.20 268.43,371.76 268.69,371.34 268.95,370.94 269.20,370.56 269.46,370.22 269.72,369.91 269.98,369.63 270.24,369.40 270.50,369.20 270.75,369.38 271.01,369.59 271.26,369.84 271.52,370.13 271.77,370.45 272.03,370.79 272.29,371.16 272.54,371.55 272.80,371.95 273.05,372.35 273.31,372.75 273.56,373.15 273.81,373.54 274.07,373.91 274.33,374.25 274.58,374.57 274.84,374.86 275.09,375.11 275.35,375.32 275.60,375.50 275.86,375.33 276.12,375.12 276.38,374.87 276.64,374.59 276.89,374.27 277.15,373.92 277.41,373.56 277.67,373.19 277.93,372.81 278.19,372.44 278.45,372.08 278.71,371.73 278.96,371.41 279.22,371.13 279.48,370.88 279.74,370.67 280.00,370.50 280.25,370.57 280.50,370.66 280.75,370.77 281.00,370.90 281.25,371.03 281.50,371.18 281.75,371.34 282.00,371.50 282.25,371.66 282.50,371.82 282.75,371.97 283.00,372.10 283.25,372.23 283.50,372.34 283.75,372.43 284.00,372.50" fill="none" stroke="#ffffc0" stroke-width="1" />
<line x1="11" y1="372.5" x2="700" y2="372.5" stroke="#f0f0ff" stroke-width="1" stroke-dasharray="3 3"/>
<rect x="12" y="398" width="8" height="14" fill="#000"/><rect x="12" y="415" width="40" height="16" fill="#000"/>
<path d="M11 477h1v3h-1zM12 473h1v4h-1zM13 469h1v4h-1zM14 465h1v4h-1zM15 461h1v4h-1zM16 457h1v4h-1zM17 454h1v3h-1zM18 450h1v4h-1zM19 446h1v4h-1zM20 442h1v4h-1zM21 438h1v4h-1zM22 435h1v3h-1zM23 431h1v4h-1zM24 427h1v4h-1zM25 423h1v4h-1zM26 418h1v5h-1zM27 414h1v4h-1zM28 409h1v5h-1zM29 405h1v4h-1zM30 400h1v5h-1zM31 395h1v5h-1zM32 390h1v5h-1zM33 385h1v5h-1zM34 381h1v4h-1zM35 376h1v5h-1zM36 371h1v5h-1zM37 367h1v4h-1zM38 363h1v4h-1zM39 359h1v4h-1zM40 355h1v4h-1zM41 351h1v4h-1zM42 348h1v3h-1zM43 344h1v4h-1zM44 341h1v3h-1zM45 337h1v4h-1zM46 334h1v3h-1zM47 330h1v4h-1zM48 327h1v3h-1zM49 324h1v3h-1zM50 321h1v3h-1zM51 318h1v3h-1zM52 315h1v3h-1zM53 312h1v3h-1zM54 309h1v3h-1zM55 306h1v3h-1zM56 303h1v3h-1zM57 300h1v3h-1zM58 297h1v3h-1zM59 295h1v2h-1zM60 292h1v3h-1zM61 290h1v2h-1zM62 287h1v3h-1zM63 285h1v2h-1zM64 282h1v3h-1zM65 280h1v2h-1zM66 277h1v3h-1zM67 275h1v2h-1zM68 273h1v2h-1zM69 271h1v2h-1zM70 269h1v2h-1zM71 268h1v2h-1zM72 266h1v2h-1zM73 264h1v2h-1zM74 263h1v2h-1zM75 262h1v2h-1zM76 261h1v2h-1zM77 261h1v1h-1zM78 261h1v1h-1zM79 261h1v1h-1zM80 261h1v1h-1zM81 261h1v1h-1zM82 261h1v2h-1zM83 262h1v1h-1zM84 262h1v1h-1zM85 262h1v2h-1zM86 263h1v1h-1zM87 263h1v2h-1zM88 264h1v2h-1zM89 265h1v1h-1zM90 265h1v2h-1zM91 266h1v2h-1zM92 267h1v2h-1zM93 268h1v1h-1zM94 268h1v2h-1zM95 269h1v2h-1zM96 270h1v1h-1zM97 270h1v2h-1zM98 271h1v2h-1zM99 272h1v1h-1zM100 272h1v2h-1zM101 273h1v1h-1zM102 273h1v2h-1zM103 274h1v1h-1zM104 274h1v2h-1zM105 275h1v2h-1zM106 276h1v1h-1zM107 276h1v2h-1zM108 277h1v1h-1zM109 277h1v2h-1zM110 278h1v1h-1zM111 278h1v2h-1zM112 279h1v1h-1zM113 279h1v2h-1zM114 280h1v2h-1zM115 281h1v1h-1zM116 281h1v2h-1zM117 282h1v1h-1zM118 282h1v2h-1zM119 283h1v1h-1zM120 283h1v2h-1zM121 284h1v2h-1zM122 285h1v1h-1zM123 285h1v2h-1zM124 286h1v1h-1zM125 286h1v2h-1zM126 287h1v1h-1zM127 287h1v2h-1zM128 288h1v1h-1zM129 288h1v2h-1zM130 289h1v2h-1zM131 290h1v1h-1zM132 290h1v2h-1zM133 291h1v1h-1zM134 291h1v2h-1zM135 292h1v1h-1zM136 292h1v2h-1zM137 293h1v1h-1zM138 293h1v2h-1zM139 294h1v1h-1zM140 294h1v2h-1zM141 295h1v1h-1zM142 295h1v2h-1zM143 296h1v1h-1zM144 296h1v2h-1zM145 297h1v1h-1zM146 297h1v2h-1zM147 298h1v1h-1zM148 298h1v2h-1zM149 299h1v1h-1zM150 299h1v2h-1zM151 300h1v1h-1zM152 300h1v2h-1zM153 301h1v1h-1zM154 301h1v2h-1zM155 302h1v1h-1zM156 302h1v2h-1zM157 303h1v1h-1zM158 303h1v1h-1zM159 303h1v2h-1zM160 304h1v1h-1zM161 304h1v2h-1zM162 305h1v1h-1zM163 305h1v1h-1zM164 305h1v2h-1zM165 306h1v1h-1zM166 306h1v1h-1zM167 306h1v2h-1zM168 307h1v1h-1zM169 307h1v1h-1zM170 307h1v2h-1zM171 308h1v1h-1zM172 308h1v2h-1zM173 309h1v1h-1zM174 309h1v1h-1zM175 309h1v1h-1zM176 309h1v2h-1zM177 310h1v1h-1zM178 310h1v1h-1zM179 310h1v2h-1zM180 311h1v1h-1zM181 311h1v1h-1zM182 311h1v2h-1zM183 312h1v1h-1zM184 312h1v1h-1zM185 312h1v2h-1zM186 313h1v1h-1zM187 313h1v1h-1zM188 313h1v2h-1zM189 314h1v1h-1zM190 314h1v1h-1zM191 314h1v2h-1zM192 315h1v1h-1zM193 315h1v1h-1zM194 315h1v1h-1zM195 315h1v2h-1zM196 316h1v1h-1zM197 316h1v1h-1zM198 316h1v2h-1zM199 317h1v1h-1zM200 317h1v1h-1zM201 317h1v2h-1zM202 318h1v1h-1zM203 318h1v1h-1zM204 318h1v2h-1zM205 319h1v1h-1zM206 319h1v1h-1zM207 319h1v2h-1zM208 320h1v1h-1zM209 320h1v1h-1zM210 320h1v1h-1zM211 320h1v2h-1zM212 321h1v1h-1zM213 321h1v1h-1zM214 321h1v2h-1zM215 322h1v1h-1zM216 322h1v1h-1zM217 322h1v2h-1zM218 323h1v1h-1zM219 323h1v1h-1zM220 323h1v2h-1zM221 324h1v1h-1zM222 324h1v1h-1zM223 324h1v1h-1zM224 324h1v2h-1zM225 325h1v1h-1zM226 325h1v1h-1zM227 325h1v2h-1zM228 326h1v1h-1zM229 326h1v1h-1zM230 326h1v1h-1zM231 326h1v2h-1zM232 327h1v1h-1zM233 327h1v1h-1zM234 327h1v2h-1zM235 328h1v1h-1zM236 328h1v1h-1zM237 328h1v1h-1zM238 328h1v2h-1zM239 329h1v1h-1zM240 329h1v1h-1zM241 329h1v1h-1zM242 329h1v2h-1zM243 330h1v1h-1zM244 330h1v1h-1zM245 330h1v1h-1zM246 330h1v2h-1zM247 331h1v1h-1zM248 331h1v1h-1zM249 331h1v1h-1zM250 331h1v2h-1zM251 332h1v1h-1zM252 332h1v1h-1zM253 332h1v1h-1zM254 332h1v1h-1zM255 332h1v2h-1zM256 333h1v1h-1zM257 333h1v1h-1zM258 333h1v1h-1zM259 333h1v1h-1zM260 333h1v2h-1zM261 334h1v1h-1zM262 334h1v1h-1zM263 334h1v1h-1zM264 334h1v1h-1zM265 334h1v2h-1zM266 335h1v1h-1zM267 335h1v1h-1zM268 335h1v1h-1zM269 335h1v1h-1zM270 335h1v1h-1zM271 335h1v2h-1zM272 336h1v1h-1zM273 336h1v1h-1zM274 336h1v1h-1zM275 336h1v1h-1zM276 336h1v2h-1zM277 337h1v1h-1zM278 337h1v1h-1zM279 337h1v1h-1zM280 337h1v1h-1zM281 337h1v2h-1zM282 338h1v1h-1zM283 338h1v1h-1zM284 338h1v1h-1zM285 338h1v2h-1zM286 339h1v1h-1zM287 339h1v2h-1zM288 340h1v1h-1zM289 340h1v1h-1zM290 340h1v2h-1zM291 341h1v1h-1zM292 341h1v2h-1zM293 342h1v2h-1zM294 343h1v1h-1zM295 343h1v2h-1zM296 344h1v1h-1zM297 344h1v2h-1zM298 345h1v1h-1zM299 345h1v2h-1zM300 346h1v1h-1zM301 346h1v2h-1zM302 347h1v1h-1zM303 347h1v2h-1zM304 348h1v2h-1zM305 349h1v1h-1zM306 349h1v2h-1zM307 350h1v1h-1zM308 350h1v2h-1zM309 351h1v1h-1zM310 351h1v2h-1zM311 352h1v1h-1zM312 352h1v2h-1zM313 353h1v1h-1zM314 353h1v2h-1zM315 354h1v1h-1zM316 354h1v2h-1zM317 355h1v1h-1zM318 355h1v2h-1zM319 356h1v2h-1zM320 357h1v1h-1zM321 357h1v1h-1zM322 357h1v2h-1zM323 358h1v1h-1zM324 358h1v2h-1zM325 359h1v1h-1zM326 359h1v2h-1zM327 360h1v1h-1zM328 360h1v2h-1zM329 361h1v1h-1zM330 361h1v2h-1zM331 362h1v1h-1zM332 362h1v2h-1zM333 363h1v1h-1zM334 363h1v1h-1zM335 363h1v2h-1zM336 364h1v1h-1zM337 364h1v2h-1zM338 365h1v1h-1zM339 365h1v2h-1zM340 366h1v1h-1zM341 366h1v1h-1zM342 366h1v2h-1zM343 367h1v1h-1zM344 367h1v2h-1zM345 368h1v1h-1zM346 368h1v2h-1zM347 369h1v1h-1zM348 369h1v2h-1zM349 370h1v1h-1zM350 370h1v1h-1zM351 370h1v2h-1zM352 371h1v1h-1zM353 371h1v2h-1zM354 372h1v1h-1zM355 372h1v2h-1zM356 373h1v1h-1zM357 373h1v2h-1zM358 374h1v1h-1zM359 374h1v2h-1zM360 375h1v1h-1zM361 375h1v2h-1zM362 376h1v1h-1zM363 376h1v1h-1zM364 376h1v2h-1zM365 377h1v1h-1zM366 377h1v2h-1zM367 378h1v1h-1zM368 378h1v2h-1zM369 379h1v1h-1zM370 379h1v2h-1zM371 380h1v1h-1zM372 380h1v2h-1zM373 381h1v1h-1zM374 381h1v1h-1zM375 381h1v2h-1zM376 382h1v1h-1zM377 382h1v2h-1zM378 383h1v1h-1zM379 383h1v2h-1zM380 384h1v1h-1zM381 384h1v1h-1zM382 384h1v2h-1zM383 385h1v1h-1zM384 385h1v1h-1zM385 385h1v2h-1zM386 386h1v1h-1zM387 386h1v1h-1zM388 386h1v2h-1zM389 387h1v1h-1zM390 387h1v2h-1zM391 388h1v1h-1zM392 388h1v1h-1zM393 388h1v2h-1zM394 389h1v1h-1zM395 389h1v1h-1zM396 389h1v2h-1zM397 390h1v1h-1zM398 390h1v1h-1zM399 390h1v2h-1zM400 391h1v1h-1zM401 391h1v1h-1zM402 391h1v2h-1zM403 392h1v1h-1zM404 392h1v1h-1zM405 392h1v2h-1zM406 393h1v1h-1zM407 393h1v1h-1zM408 393h1v2h-1zM409 394h1v1h-1zM410 394h1v1h-1zM411 394h1v2h-1zM412 395h1v1h-1zM413 395h1v1h-1zM414 395h1v2h-1zM415 396h1v1h-1zM416 396h1v1h-1zM417 396h1v2h-1zM418 397h1v1h-1zM419 397h1v1h-1zM420 397h1v2h-1zM421 398h1v1h-1zM422 398h1v1h-1zM423 398h1v2h-1zM424 399h1v1h-1zM425 399h1v1h-1zM426 399h1v2h-1zM427 400h1v1h-1zM428 400h1v1h-1zM429 400h1v2h-1zM430 401h1v1h-1zM431 401h1v2h-1zM432 402h1v1h-1zM433 402h1v1h-1zM434 402h1v2h-1zM435 403h1v1h-1zM436 403h1v1h-1zM437 403h1v2h-1zM438 404h1v1h-1zM439 404h1v2h-1zM440 405h1v1h-1zM441 405h1v1h-1zM442 405h1v2h-1zM443 406h1v1h-1zM444 406h1v1h-1zM445 406h1v2h-1zM446 407h1v1h-1zM447 407h1v1h-1zM448 407h1v2h-1zM449 408h1v1h-1zM450 408h1v1h-1zM451 408h1v2h-1zM452 409h1v1h-1zM453 409h1v2h-1zM454 410h1v1h-1zM455 410h1v1h-1zM456 410h1v2h-1zM457 411h1v1h-1zM458 411h1v1h-1zM459 411h1v2h-1zM460 412h1v1h-1zM461 412h1v1h-1zM462 412h1v1h-1zM463 412h1v2h-1zM464 413h1v1h-1zM465 413h1v1h-1zM466 413h1v2h-1zM467 414h1v1h-1zM468 414h1v1h-1zM469 414h1v2h-1zM470 415h1v1h-1zM471 415h1v1h-1zM472 415h1v1h-1zM473 415h1v2h-1zM474 416h1v1h-1zM475 416h1v1h-1zM476 416h1v2h-1zM477 417h1v1h-1zM478 417h1v1h-1zM479 417h1v1h-1zM480 417h1v2h-1zM481 418h1v1h-1zM482 418h1v1h-1zM483 418h1v2h-1zM484 419h1v1h-1zM485 419h1v1h-1zM486 419h1v1h-1zM487 419h1v2h-1zM488 420h1v1h-1zM489 420h1v1h-1zM490 420h1v2h-1zM491 421h1v1h-1zM492 421h1v1h-1zM493 421h1v1h-1zM494 421h1v2h-1zM495 422h1v1h-1zM496 422h1v1h-1zM497 422h1v1h-1zM498 422h1v2h-1zM499 423h1v1h-1zM500 423h1v1h-1zM501 423h1v2h-1zM502 424h1v1h-1zM503 424h1v1h-1zM504 424h1v1h-1zM505 424h1v2h-1zM506 425h1v1h-1zM507 425h1v1h-1zM508 425h1v1h-1zM509 425h1v2h-1zM510 426h1v1h-1zM511 426h1v1h-1zM512 426h1v2h-1zM513 427h1v1h-1zM514 427h1v1h-1zM515 427h1v1h-1zM516 427h1v2h-1zM517 428h1v1h-1zM518 428h1v1h-1zM519 428h1v1h-1zM520 428h1v2h-1zM521 429h1v1h-1zM522 429h1v1h-1zM523 429h1v1h-1zM524 429h1v2h-1zM525 430h1v1h-1zM526 430h1v1h-1zM527 430h1v1h-1zM528 430h1v2h-1zM529 431h1v1h-1zM530 431h1v1h-1zM531 431h1v2h-1zM532 432h1v1h-1zM533 432h1v1h-1zM534 432h1v1h-1zM535 432h1v2h-1zM536 433h1v1h-1zM537 433h1v1h-1zM538 433h1v1h-1zM539 433h1v2h-1zM540 434h1v1h-1zM541 434h1v1h-1zM542 434h1v1h-1zM543 434h1v1h-1zM544 434h1v2h-1zM545 435h1v1h-1zM546 435h1v1h-1zM547 435h1v1h-1zM548 435h1v2h-1zM549 436h1v1h-1zM550 436h1v1h-1zM551 436h1v1h-1zM552 436h1v2h-1zM553 437h1v1h-1zM554 437h1v1h-1zM555 437h1v1h-1zM556 437h1v2h-1zM557 438h1v1h-1zM558 438h1v1h-1zM559 438h1v1h-1zM560 438h1v1h-1zM561 438h1v2h-1zM562 439h1v1h-1zM563 439h1v1h-1zM564 439h1v1h-1zM565 439h1v2h-1zM566 440h1v1h-1zM567 440h1v1h-1zM568 440h1v1h-1zM569 440h1v1h-1zM570 440h1v2h-1zM571 441h1v1h-1zM572 441h1v1h-1zM573 441h1v1h-1zM574 441h1v2h-1zM575 442h1v1h-1zM576 442h1v1h-1zM577 442h1v1h-1zM578 442h1v1h-1zM579 442h1v2h-1zM580 443h1v1h-1zM581 443h1v1h-1zM582 443h1v1h-1zM583 443h1v2h-1zM584 444h1v1h-1zM585 444h1v1h-1zM586 444h1v1h-1zM587 444h1v1h-1zM588 444h1v2h-1zM589 445h1v1h-1zM590 445h1v1h-1zM591 445h1v1h-1zM592 445h1v2h-1zM593 446h1v1h-1zM594 446h1v1h-1zM595 446h1v1h-1zM596 446h1v1h-1zM597 446h1v2h-1zM598 447h1v1h-1zM599 447h1v1h-1zM600 447h1v1h-1zM601 447h1v1h-1zM602 447h1v2h-1zM603 448h1v1h-1zM604 448h1v1h-1zM605 448h1v1h-1zM606 448h1v2h-1zM607 449h1v1h-1zM608 449h1v1h-1zM609 449h1v1h-1zM610 449h1v1h-1zM611 449h1v2h-1zM612 450h1v1h-1zM613 450h1v1h-1zM614 450h1v1h-1zM615 450h1v1h-1zM616 450h1v2h-1zM617 451h1v1h-1zM618 451h1v1h-1zM619 451h1v1h-1zM620 451h1v2h-1zM621 452h1v1h-1zM622 452h1v1h-1zM623 452h1v1h-1zM624 452h1v1h-1zM625 452h1v2h-1zM626 453h1v1h-1zM627 453h1v1h-1zM628 453h1v1h-1zM629 453h1v1h-1zM630 453h1v2h-1zM631 454h1v1h-1zM632 454h1v1h-1zM633 454h1v1h-1zM634 454h1v1h-1zM635 454h1v2h-1zM636 455h1v1h-1zM637 455h1v1h-1zM638 455h1v1h-1zM639 455h1v1h-1zM640 455h1v2h-1zM641 456h1v1h-1zM642 456h1v1h-1zM643 456h1v1h-1zM644 456h1v2h-1zM645 457h1v1h-1zM646 457h1v1h-1zM647 457h1v1h-1zM648 457h1v1h-1zM649 457h1v2h-1zM650 458h1v1h-1zM651 458h1v1h-1zM652 458h1v1h-1zM653 458h1v1h-1zM654 458h1v2h-1zM655 459h1v1h-1zM656 459h1v1h-1zM657 459h1v1h-1zM658 459h1v1h-1zM659 459h1v2h-1zM660 460h1v1h-1zM661 460h1v1h-1zM662 460h1v1h-1zM663 460h1v1h-1zM664 460h1v2h-1zM665 461h1v1h-1zM666 461h1v1h-1zM667 461h1v1h-1zM668 461h1v1h-1zM669 461h1v2h-1zM670 462h1v1h-1zM671 462h1v1h-1zM672 462h1v1h-1zM673 462h1v1h-1zM674 462h1v2h-1zM675 463h1v1h-1zM676 463h1v1h-1zM677 463h1v1h-1zM678 463h1v1h-1zM679 463h1v2h-1zM680 464h1v1h-1zM681 464h1v1h-1zM682 464h1v1h-1zM683 464h1v1h-1zM684 464h1v2h-1zM685 465h1v1h-1zM686 465h1v1h-1zM687 465h1v1h-1zM688 465h1v1h-1zM689 465h1v2h-1zM690 466h1v1h-1zM691 466h1v1h-1zM692 466h1v1h-1zM693 466h1v1h-1zM694 466h1v2h-1zM695 467h1v1h-1zM696 467h1v1h-1zM697 467h1v1h-1zM698 467h1v1h-1zM699 467h1v1h-1z" fill="#00e000"/>
</svg>
<div style="font:12px/13px 'Liberation Sans',sans-serif;letter-spacing:0.8px;white-space:pre;position:absolute;left:14px;transform:scaleX(0.9);transform-origin:0 0;top:399px;color:#00e000">v</div>
<div style="font:12px/13px 'Liberation Sans',sans-serif;letter-spacing:0.8px;white-space:pre;position:absolute;left:14px;transform:scaleX(0.9);transform-origin:0 0;top:418px;color:#0000e0">alpha i</div>
<div style="font:12px/13px 'Liberation Sans',sans-serif;letter-spacing:0.8px;white-space:pre;position:absolute;left:14px;transform:scaleX(0.9);transform-origin:0 0;top:437px;color:#e00000">alpha s</div>
<div style="font:12px/13px 'Liberation Sans',sans-serif;letter-spacing:0.8px;white-space:pre;position:absolute;left:14px;transform:scaleX(0.9);transform-origin:0 0;top:456px;color:#ffffc0">omega</div>
</body></html>
